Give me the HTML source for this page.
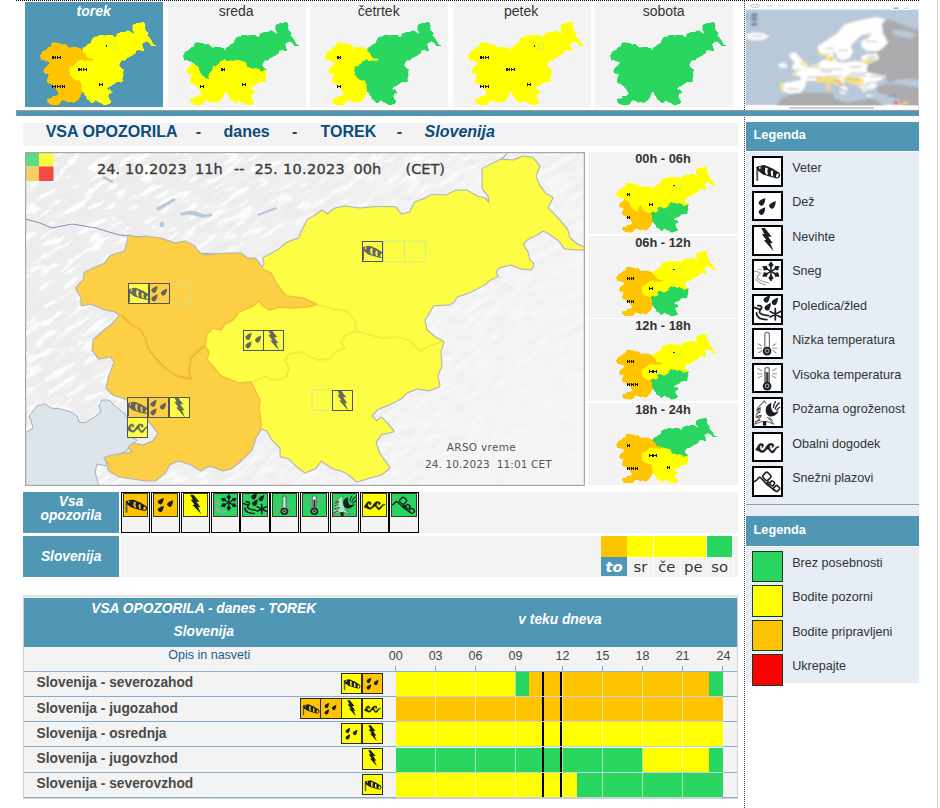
<!DOCTYPE html><html lang="sl"><head><meta charset="utf-8"><title>Opozorila</title><style>
html,body{margin:0;padding:0;background:#fff;}
body{width:940px;height:808px;position:relative;overflow:hidden;font-family:"Liberation Sans",sans-serif;color:#333;}
div,span,svg{position:absolute;box-sizing:border-box;}
span{white-space:nowrap;line-height:1;}
.ic{box-sizing:border-box;overflow:hidden;color:#1b1f23;}
.b{font-weight:bold}.i{font-style:italic}
.dv{font-family:"DejaVu Sans",sans-serif;}
.c{text-align:center;}
</style></head><body><svg width="0" height="0" style="left:0;top:0"><defs><symbol id="i-wind" viewBox="0 0 31 31"><rect x="4.1" y="11" width="2" height="14" fill="#555"/><path d="M4.1 11.2 Q8 9.6 12.3 9.1 L20 12.3 L27.6 17 Q29 19.5 27.6 21.6 Q26.6 23 25 22.7 L20 21.6 L10.8 18.7 L6 15Z" fill="currentColor"/><path d="M7.3 10.9 Q6.6 12.2 7.4 13.2 L8.6 12.9 Q8 11.8 8.7 10.7Z" fill="var(--bg,#fff)"/><path d="M13.4 11.6 Q12.2 15 13.8 18.4 L16 19 Q14.6 15.6 15.8 12.4Z" fill="var(--bg,#fff)"/><path d="M19.2 14.4 Q18.2 17.5 19.4 20.3 L21.4 20.8 Q20.4 18 21.3 15.4Z" fill="var(--bg,#fff)"/><ellipse cx="25.5" cy="19.7" rx="1.3" ry="2.1" transform="rotate(15 25.5 19.7)" fill="var(--bg,#fff)"/></symbol><symbol id="i-rain" viewBox="0 0 31 31"><path d="M13.4 7 Q13 11.6 11.5 13.7 A2.7 2.7 0 1 1 7.7 9.9 Q9.8 8.2 13.4 7 Z" fill="currentColor"/><path d="M24 10 Q23.6 14.6 22.1 16.7 A2.7 2.7 0 1 1 18.3 12.9 Q20.4 11.2 24 10 Z" fill="currentColor"/><path d="M13.4 16.4 Q13 21 11.5 23.1 A2.7 2.7 0 1 1 7.7 19.3 Q9.8 17.6 13.4 16.4 Z" fill="currentColor"/></symbol><symbol id="i-storm" viewBox="0 0 31 31"><path d="M9.1 3.1 L12.8 3.1 L19.7 11.8 L16.2 11.8 L20.9 18.5 L18.2 18.2 L21.7 26.6 L11.8 15.5 L14.3 15.2 L9.8 9.3 L12.3 9.1Z" fill="currentColor"/></symbol><symbol id="i-snow" viewBox="0 0 31 31"><g stroke="#a8a8a8" stroke-width="1.15" fill="none" stroke-linecap="round"><path d="M2.4 12.3 Q6 12.6 8.6 14.4 Q5 17 4.9 19.2 Q9 23 16.7 24.2"/><path d="M3.4 20.7 Q7 24.8 13.3 26.1"/><path d="M5.8 10.3 L9.3 10.8"/></g><g stroke="currentColor" stroke-width="1.5" stroke-linecap="round" fill="none"><line x1="19" y1="12.5" x2="19.00" y2="3.40"/><line x1="19" y1="12.5" x2="11.12" y2="7.95"/><line x1="19" y1="12.5" x2="11.12" y2="17.05"/><line x1="19" y1="12.5" x2="19.00" y2="21.60"/><line x1="19" y1="12.5" x2="26.88" y2="17.05"/><line x1="19" y1="12.5" x2="26.88" y2="7.95"/></g><g fill="currentColor"><path d="M19.00 9.31 L21.73 5.77 L19.00 2.76 L16.27 5.77Z"/><path d="M16.24 10.91 L14.53 6.77 L10.57 7.63 L11.80 11.50Z"/><path d="M16.24 14.09 L11.80 13.50 L10.57 17.37 L14.53 18.23Z"/><path d="M19.00 15.69 L16.27 19.23 L19.00 22.24 L21.73 19.23Z"/><path d="M21.76 14.09 L23.47 18.23 L27.43 17.37 L26.20 13.50Z"/><path d="M21.76 10.91 L26.20 11.50 L27.43 7.63 L23.47 6.77Z"/></g></symbol><symbol id="i-ice" viewBox="0 0 31 31"><path d="M18.1 1.2 Q17.7 5.8 16.2 7.9 A2.2 2.2 0 1 1 12.4 4.1 Q14.5 2.4 18.1 1.2 Z" fill="currentColor"/><path d="M26.3 3.6 Q25.9 8.2 24.4 10.3 A2.2 2.2 0 1 1 20.6 6.5 Q22.7 4.8 26.3 3.6 Z" fill="currentColor"/><path d="M19.1 9.1 Q18.7 13.7 17.2 15.8 A2.2 2.2 0 1 1 13.4 12 Q15.5 10.3 19.1 9.1 Z" fill="currentColor"/><g stroke="currentColor" stroke-width="1.8" fill="none" stroke-linecap="round"><path d="M2.4 13.8 L8.3 15.7"/><path d="M5.8 11.8 Q10.5 11.6 9.3 14.5 Q7 17 7.6 18.8 Q8.6 21 16.7 21.9"/><path d="M4.4 19.2 Q4.6 23 8 24.6 Q10.5 25.6 14.8 25.9"/><path d="M23.4 14.8 V26.1 M18.2 17.7 L28.6 23.2 M18.2 23.2 L28.6 17.7"/></g></symbol><symbol id="i-low" viewBox="0 0 31 31"><g stroke="#999" stroke-width="1.1" stroke-linecap="round"><path d="M5.8 15.9 L9.3 17.7 M5.3 20.5 H9.6 M6.1 25.1 L9.8 22.9 M24.2 15.9 L20.9 17.7 M24.9 20.5 H20.7 M24.2 25.3 L21.2 22.9"/></g><path d="M12.8 20 V6.6 a2.3 2.3 0 0 1 4.6 0 V20" fill="var(--bg,#fff)" stroke="#777" stroke-width="1.3"/><path d="M14 19 V7 a1.1 1.1 0 0 1 2.2 0 V19" fill="#fff" opacity="0.75"/><circle cx="15.1" cy="23.3" r="4.4" fill="currentColor"/><circle cx="15.1" cy="23.3" r="2.5" fill="#9a9a9a"/><circle cx="15.1" cy="23.3" r="1.2" fill="currentColor"/></symbol><symbol id="i-high" viewBox="0 0 31 31"><g stroke="#999" stroke-width="1.1" stroke-linecap="round"><path d="M5.8 5.6 L9.6 7.8 M5.3 10.8 H9.8 M6.1 15.2 L10 13 M24.4 5.6 L20.6 7.8 M24.9 10.8 H20.4 M24.1 15.2 L20.2 13"/></g><path d="M12.8 20 V6.6 a2.3 2.3 0 0 1 4.6 0 V20" fill="#8a8a8a" stroke="#777" stroke-width="1.3"/><path d="M13.6 9 V6.8 a1.5 1.5 0 0 1 3 0 V9Z" fill="#fff"/><path d="M15.1 9.5 V22" stroke="currentColor" stroke-width="1.2"/><circle cx="15.1" cy="23.3" r="4.4" fill="currentColor"/><circle cx="15.1" cy="23.3" r="2.5" fill="#9a9a9a"/><circle cx="15.1" cy="23.3" r="1.2" fill="currentColor"/></symbol><symbol id="i-fire" viewBox="0 0 31 31"><path d="M12.3 4 L5.3 11.6 L5 14.6 L3.9 19 L4.4 21 L2.4 27.5 L10.8 24.5 L14.3 24.5 L22 27.5 L15.5 20.5 L13 12 Z" fill="#fff" opacity="0.55"/><g stroke="#707070" stroke-width="1.1" fill="none" stroke-linecap="round" stroke-linejoin="round"><path d="M6 11.8 L8.6 11 M4.6 16.6 L8 15.4 M4.8 20 L8.6 18.4 M3.4 25 L8 23.2 M5 13 L7 12.6" stroke="#333"/><path d="M12.3 4 L5.3 11.6 Q4.6 13.4 5 14.6 Q7 14.2 8.3 12.9"/><path d="M8.3 12.9 L3.9 19 Q3.8 20.4 4.4 21 Q7.4 20.6 9.3 19"/><path d="M9.3 19 L2.4 27.5 L10.8 24.5"/><path d="M12.3 4 L13.8 6.2"/><path d="M15.5 20.5 L22 27.5 L14.3 24.5"/><path d="M17 21 L20.5 23.5"/></g><rect x="10.8" y="24.3" width="3.5" height="4.7" fill="currentColor"/><path d="M19.4 5.9 Q14 8 13.6 12.8 Q13.6 17.4 17 19.4 Q21 20.6 24 18 Q26.4 16 26.8 14 Q24.4 15.8 22.2 15.6 Q20.8 15.4 20.2 14 Q18.4 10 19.4 5.9Z" fill="currentColor"/><g stroke="currentColor" stroke-width="1.2" fill="none" stroke-linecap="round"><path d="M23.6 4.6 Q21.4 8 21.6 10.6"/><path d="M27.4 5.8 Q23.6 9.4 23.4 12.2"/><path d="M28 10.4 Q25.4 12 24.8 13.6"/></g></symbol><symbol id="i-coast" viewBox="0 0 31 31"><path d="M3.4 18.3 L4.9 15.6 L6.8 12.6 Q7.8 11.6 8.8 11.5 Q10.2 11.5 10.8 12.1 Q11.7 12.9 11.5 13.9 Q11.4 14.9 10.8 15.3 L9.6 15.6 Q10.2 15 10 14.4 Q9.9 13.5 9.3 13.4 Q8.5 13.4 8.1 14.1 Q7.5 15 7.8 16.1 Q8.1 17.4 8.8 18.1 Q9.5 18.8 10.3 18.8 Q11.4 18.6 12.3 17.6 L14.3 14.6 Q15.2 13.2 16.2 12.4 Q17.2 11.6 18.2 11.5 Q19.8 11.4 20.7 11.9 Q21.8 12.4 21.9 13.4 Q22 14.5 21.2 15.1 L19.7 15.6 Q20.4 15.1 20.2 14.4 Q20 13.2 19.2 13.1 Q18.4 13.2 18 13.9 Q17.4 15 17.7 16.1 Q18 17.4 18.7 18.1 Q19.4 19 20.2 19.1 Q21.3 18.9 22.2 17.6 L24.2 15.3 Q25.4 14.6 27.3 14.8 L27.1 15.3 Q25.6 15.6 24.7 16.6 L22.7 19.6 Q21.5 21.2 20.2 21.3 Q18.8 21.2 17.7 19.1 Q16.8 17.4 15.7 17.1 Q14.4 17.6 13.3 19.1 Q12 20.8 10.3 20.8 Q8.6 20.6 7.4 19.8 Q6 18.8 3.4 18.3Z" fill="currentColor" stroke="currentColor" stroke-width="0.5" stroke-linejoin="round"/></symbol><symbol id="i-aval" viewBox="0 0 31 31"><g stroke="currentColor" stroke-width="1.6" fill="none" stroke-linecap="round" stroke-linejoin="round"><path d="M1.9 15.8 Q3.6 15.2 4.9 13.9 L6.4 12 Q7.3 11 8.2 11.6 L12.3 15.8 L15.7 19.3 L19.2 21.8 L22.2 24.3"/><rect x="11.3" y="7" width="7" height="7" rx="1.96" transform="rotate(44 14.8 10.5)"/><rect x="18.05" y="15.45" width="4.3" height="4.3" rx="1.204" transform="rotate(35 20.2 17.6)"/><rect x="22.1" y="20.2" width="5.2" height="5.2" rx="1.456" transform="rotate(44 24.7 22.8)"/><rect x="15.15" y="16.35" width="2.3" height="2.3" rx="0.644" transform="rotate(20 16.3 17.5)"/></g></symbol><symbol id="r-NW" viewBox="76 156 512 326" preserveAspectRatio="none"><path d="M129 236 L137 238 L145 237 L161 239 L175 244 L185 242 L193 246 L199 253 L205 256 L213 255 L225 254 L241 254 L247 259 L255 259 L261 267 L262 269 L271 273 L277 284 L283 292 L287 296 L303 298 L317 304.5 L307 307 L293 308 L281 307 L269 310 L263 306 L259 301 L253 306 L239 312 L233 320 L225 324 L221 330 L213 328 L211 330 L207 334 L205 346 L199 350 L191 358 L189 370 L191 379 L177 376 L165 368 L157 360 L149 350 L145 338 L141 330 L133 326 L121 315 L115 311 L105 309 L91 303 L82 305 L82 298 L76.6 288 L84 280 L85 273 L93 269 L105 264 L111 256 L125 252 L128 242 L129 236Z"/></symbol><symbol id="r-NE" viewBox="76 156 512 326" preserveAspectRatio="none"><path d="M262 269 L265 264 L264 258 L279 250 L287 243 L299 239 L303 230 L308 220 L315 216 L322 211 L327 215 L335 209 L345 207 L360 209 L375 207.5 L395 207.5 L401 215 L410 213 L415 203 L425 199 L431 195.5 L446 196 L456 191 L467 191 L477 197 L485 199 L490 205 L489 196 L483 188 L483 169 L491 165 L501 160 L513 161 L523 157 L532 158 L539 166 L535 176 L539 186 L545 194 L552 198 L547 208 L557 218 L567 230 L569 238 L577 245 L587 249 L575 249 L565 248 L559 240 L549 233 L543 230 L537 234 L527 239 L522 244 L527 252 L529 260 L533 264 L531 269 L521 268 L511 264 L499 267 L495 272 L497 276 L489 280 L485 284 L469 292 L457 296 L453 302 L449 304 L433 305 L429 312 L424 320 L426 330 L434 337 L443 342 L441 342 L429 346 L421 351 L415 346 L409 340 L397 337 L381 338 L367 334 L355 331 L356 324 L353 318 L347 311 L333 309 L317 304.5 L303 298 L287 296 L283 292 L277 284 L271 273 L262 269Z"/></symbol><symbol id="r-SW" viewBox="76 156 512 326" preserveAspectRatio="none"><path d="M121 315 L113 324 L101 334 L94 340 L93 350 L99 358 L111 356 L115 362 L109 378 L107 388 L113 394 L125 398 L137 406 L147 418 L155 428 L159 434 L153 442 L143 446 L133 444 L129 448 L135 452 L125 454 L113 456 L105 458 L109 464 L109 470 L119 476 L133 478 L145 480 L155 480 L165 472 L169 464 L179 460 L191 464 L201 470 L207 466 L213 466 L223 470 L231 468 L241 460 L251 450 L255 438 L261 428 L261 420 L259 410 L260 400 L255 390 L251 382 L239 383 L231 380 L221 376 L213 366 L207 360 L209 352 L205 346 L199 350 L191 358 L189 370 L191 379 L177 376 L165 368 L157 360 L149 350 L145 338 L141 330 L133 326 L121 315Z"/></symbol><symbol id="r-C" viewBox="76 156 512 326" preserveAspectRatio="none"><path d="M205 346 L207 334 L211 330 L213 328 L221 330 L225 324 L233 320 L239 312 L253 306 L259 301 L263 306 L269 310 L281 307 L293 308 L307 307 L317 304.5 L333 309 L347 311 L353 318 L356 324 L355 331 L345 336 L341 342 L345 348 L335 352 L329 359 L317 360 L309 356 L301 352 L289 354 L285 360 L289 368 L287 376 L281 379 L271 380 L265 376 L257 380 L251 382 L239 383 L231 380 L221 376 L213 366 L207 360 L209 352 L205 346Z"/></symbol><symbol id="r-SE" viewBox="76 156 512 326" preserveAspectRatio="none"><path d="M355 331 L367 334 L381 338 L397 337 L409 340 L415 346 L421 351 L429 346 L441 342 L443 342 L440 352 L441 366 L437 376 L439 386 L429 390 L417 388 L407 392 L401 398 L389 404 L377 409 L371 416 L377 422 L381 418 L387 424 L393 431 L381 434 L375 442 L379 454 L385 462 L389 468 L381 474 L367 478 L357 481 L349 474 L341 470 L333 468 L321 460 L315 468 L305 472 L297 466 L289 458 L281 456 L281 448 L273 440 L267 430 L261 428 L261 420 L259 410 L260 400 L255 390 L251 382 L257 380 L265 376 L271 380 L281 379 L287 376 L289 368 L285 360 L289 354 L301 352 L309 356 L317 360 L329 359 L335 352 L345 348 L341 342 L345 336 L355 331Z"/></symbol></defs></svg>
<div style="left:16px;top:0px;width:903px;height:1px;border-top:1px dotted #000;"></div>
<div style="left:744px;top:0px;width:1px;height:808px;border-left:1px dotted #3a3a3a;"></div>
<div style="left:16px;top:110px;width:903px;height:6px;background:#4f97b5;border-top:1px solid #9a9a9a;border-left:1px solid #9a9a9a;"></div>
<div style="left:937px;top:0px;width:1.2px;height:808px;background:#d0d0d0;"></div>
<div style="left:25px;top:2px;width:138.3px;height:105px;background:#4f97b5;"></div>
<span class="b i c" style="left:24.5px;top:4.05px;font-size:14px;width:138.3px;color:#fff;">torek</span>
<svg style="left:40.2px;top:21.6px;width:116.6px;height:83.7px" viewBox="76 156 512 326" preserveAspectRatio="none" shape-rendering="crispEdges"><path d="M129 236 L137 238 L145 237 L161 239 L175 244 L185 242 L193 246 L199 253 L205 256 L213 255 L225 254 L241 254 L247 259 L255 259 L261 267 L262 269 L271 273 L277 284 L283 292 L287 296 L303 298 L317 304.5 L307 307 L293 308 L281 307 L269 310 L263 306 L259 301 L253 306 L239 312 L233 320 L225 324 L221 330 L213 328 L211 330 L207 334 L205 346 L199 350 L191 358 L189 370 L191 379 L177 376 L165 368 L157 360 L149 350 L145 338 L141 330 L133 326 L121 315 L115 311 L105 309 L91 303 L82 305 L82 298 L76.6 288 L84 280 L85 273 L93 269 L105 264 L111 256 L125 252 L128 242 L129 236Z" fill="#ffc400" stroke="#ffc400" stroke-width="2"/><path d="M262 269 L265 264 L264 258 L279 250 L287 243 L299 239 L303 230 L308 220 L315 216 L322 211 L327 215 L335 209 L345 207 L360 209 L375 207.5 L395 207.5 L401 215 L410 213 L415 203 L425 199 L431 195.5 L446 196 L456 191 L467 191 L477 197 L485 199 L490 205 L489 196 L483 188 L483 169 L491 165 L501 160 L513 161 L523 157 L532 158 L539 166 L535 176 L539 186 L545 194 L552 198 L547 208 L557 218 L567 230 L569 238 L577 245 L587 249 L575 249 L565 248 L559 240 L549 233 L543 230 L537 234 L527 239 L522 244 L527 252 L529 260 L533 264 L531 269 L521 268 L511 264 L499 267 L495 272 L497 276 L489 280 L485 284 L469 292 L457 296 L453 302 L449 304 L433 305 L429 312 L424 320 L426 330 L434 337 L443 342 L441 342 L429 346 L421 351 L415 346 L409 340 L397 337 L381 338 L367 334 L355 331 L356 324 L353 318 L347 311 L333 309 L317 304.5 L303 298 L287 296 L283 292 L277 284 L271 273 L262 269Z" fill="#ffff00" stroke="#ffff00" stroke-width="2"/><path d="M121 315 L113 324 L101 334 L94 340 L93 350 L99 358 L111 356 L115 362 L109 378 L107 388 L113 394 L125 398 L137 406 L147 418 L155 428 L159 434 L153 442 L143 446 L133 444 L129 448 L135 452 L125 454 L113 456 L105 458 L109 464 L109 470 L119 476 L133 478 L145 480 L155 480 L165 472 L169 464 L179 460 L191 464 L201 470 L207 466 L213 466 L223 470 L231 468 L241 460 L251 450 L255 438 L261 428 L261 420 L259 410 L260 400 L255 390 L251 382 L239 383 L231 380 L221 376 L213 366 L207 360 L209 352 L205 346 L199 350 L191 358 L189 370 L191 379 L177 376 L165 368 L157 360 L149 350 L145 338 L141 330 L133 326 L121 315Z" fill="#ffc400" stroke="#ffc400" stroke-width="2"/><path d="M355 331 L367 334 L381 338 L397 337 L409 340 L415 346 L421 351 L429 346 L441 342 L443 342 L440 352 L441 366 L437 376 L439 386 L429 390 L417 388 L407 392 L401 398 L389 404 L377 409 L371 416 L377 422 L381 418 L387 424 L393 431 L381 434 L375 442 L379 454 L385 462 L389 468 L381 474 L367 478 L357 481 L349 474 L341 470 L333 468 L321 460 L315 468 L305 472 L297 466 L289 458 L281 456 L281 448 L273 440 L267 430 L261 428 L261 420 L259 410 L260 400 L255 390 L251 382 L257 380 L265 376 L271 380 L281 379 L287 376 L289 368 L285 360 L289 354 L301 352 L309 356 L317 360 L329 359 L335 352 L345 348 L341 342 L345 336 L355 331Z" fill="#ffff00" stroke="#ffff00" stroke-width="2"/><path d="M205 346 L207 334 L211 330 L213 328 L221 330 L225 324 L233 320 L239 312 L253 306 L259 301 L263 306 L269 310 L281 307 L293 308 L307 307 L317 304.5 L333 309 L347 311 L353 318 L356 324 L355 331 L345 336 L341 342 L345 348 L335 352 L329 359 L317 360 L309 356 L301 352 L289 354 L285 360 L289 368 L287 376 L281 379 L271 380 L265 376 L257 380 L251 382 L239 383 L231 380 L221 376 L213 366 L207 360 L209 352 L205 346Z" fill="#ffff00" stroke="#ffff00" stroke-width="2"/><path d="M130.4 287.1 h5 v4.5 h7 v-4.5 h5 v14 h-5 v-4.5 h-7 v4.5 h-5z" fill="#151515"/><path d="M151 287.1 h5 v4.5 h7 v-4.5 h5 v14 h-5 v-4.5 h-7 v4.5 h-5z" fill="#151515"/><path d="M244.6 333.5 h5 v4.5 h7 v-4.5 h5 v14 h-5 v-4.5 h-7 v4.5 h-5z" fill="#151515"/><path d="M265 333.5 h5 v4.5 h7 v-4.5 h5 v14 h-5 v-4.5 h-7 v4.5 h-5z" fill="#151515"/><path d="M129.4 400.5 h5 v4.5 h7 v-4.5 h5 v14 h-5 v-4.5 h-7 v4.5 h-5z" fill="#151515"/><path d="M150 400.5 h5 v4.5 h7 v-4.5 h5 v14 h-5 v-4.5 h-7 v4.5 h-5z" fill="#151515"/><path d="M170.6 400.5 h5 v4.5 h7 v-4.5 h5 v14 h-5 v-4.5 h-7 v4.5 h-5z" fill="#151515"/><path d="M334.4 393.1 h5 v4.5 h7 v-4.5 h5 v14 h-5 v-4.5 h-7 v4.5 h-5z" fill="#151515"/><rect x="365.3" y="244.5" width="7" height="7" fill="#333"/><rect x="384.3" y="241.5" width="22" height="20" fill="none" stroke="#b8ee70" stroke-width="2.5"/></svg>
<div style="left:167.5px;top:2px;width:138.3px;height:105px;background:#f3f3f3;"></div>
<span class="c" style="left:167px;top:4.05px;font-size:14px;width:138.3px;color:#333;">sreda</span>
<svg style="left:182.7px;top:21.6px;width:116.6px;height:83.7px" viewBox="76 156 512 326" preserveAspectRatio="none" shape-rendering="crispEdges"><path d="M129 236 L137 238 L145 237 L161 239 L175 244 L185 242 L193 246 L199 253 L205 256 L213 255 L225 254 L241 254 L247 259 L255 259 L261 267 L262 269 L271 273 L277 284 L283 292 L287 296 L303 298 L317 304.5 L307 307 L293 308 L281 307 L269 310 L263 306 L259 301 L253 306 L239 312 L233 320 L225 324 L221 330 L213 328 L211 330 L207 334 L205 346 L199 350 L191 358 L189 370 L191 379 L177 376 L165 368 L157 360 L149 350 L145 338 L141 330 L133 326 L121 315 L115 311 L105 309 L91 303 L82 305 L82 298 L76.6 288 L84 280 L85 273 L93 269 L105 264 L111 256 L125 252 L128 242 L129 236Z" fill="#29d660" stroke="#29d660" stroke-width="2"/><path d="M262 269 L265 264 L264 258 L279 250 L287 243 L299 239 L303 230 L308 220 L315 216 L322 211 L327 215 L335 209 L345 207 L360 209 L375 207.5 L395 207.5 L401 215 L410 213 L415 203 L425 199 L431 195.5 L446 196 L456 191 L467 191 L477 197 L485 199 L490 205 L489 196 L483 188 L483 169 L491 165 L501 160 L513 161 L523 157 L532 158 L539 166 L535 176 L539 186 L545 194 L552 198 L547 208 L557 218 L567 230 L569 238 L577 245 L587 249 L575 249 L565 248 L559 240 L549 233 L543 230 L537 234 L527 239 L522 244 L527 252 L529 260 L533 264 L531 269 L521 268 L511 264 L499 267 L495 272 L497 276 L489 280 L485 284 L469 292 L457 296 L453 302 L449 304 L433 305 L429 312 L424 320 L426 330 L434 337 L443 342 L441 342 L429 346 L421 351 L415 346 L409 340 L397 337 L381 338 L367 334 L355 331 L356 324 L353 318 L347 311 L333 309 L317 304.5 L303 298 L287 296 L283 292 L277 284 L271 273 L262 269Z" fill="#29d660" stroke="#29d660" stroke-width="2"/><path d="M121 315 L113 324 L101 334 L94 340 L93 350 L99 358 L111 356 L115 362 L109 378 L107 388 L113 394 L125 398 L137 406 L147 418 L155 428 L159 434 L153 442 L143 446 L133 444 L129 448 L135 452 L125 454 L113 456 L105 458 L109 464 L109 470 L119 476 L133 478 L145 480 L155 480 L165 472 L169 464 L179 460 L191 464 L201 470 L207 466 L213 466 L223 470 L231 468 L241 460 L251 450 L255 438 L261 428 L261 420 L259 410 L260 400 L255 390 L251 382 L239 383 L231 380 L221 376 L213 366 L207 360 L209 352 L205 346 L199 350 L191 358 L189 370 L191 379 L177 376 L165 368 L157 360 L149 350 L145 338 L141 330 L133 326 L121 315Z" fill="#ffff00" stroke="#ffff00" stroke-width="2"/><path d="M355 331 L367 334 L381 338 L397 337 L409 340 L415 346 L421 351 L429 346 L441 342 L443 342 L440 352 L441 366 L437 376 L439 386 L429 390 L417 388 L407 392 L401 398 L389 404 L377 409 L371 416 L377 422 L381 418 L387 424 L393 431 L381 434 L375 442 L379 454 L385 462 L389 468 L381 474 L367 478 L357 481 L349 474 L341 470 L333 468 L321 460 L315 468 L305 472 L297 466 L289 458 L281 456 L281 448 L273 440 L267 430 L261 428 L261 420 L259 410 L260 400 L255 390 L251 382 L257 380 L265 376 L271 380 L281 379 L287 376 L289 368 L285 360 L289 354 L301 352 L309 356 L317 360 L329 359 L335 352 L345 348 L341 342 L345 336 L355 331Z" fill="#ffff00" stroke="#ffff00" stroke-width="2"/><path d="M205 346 L207 334 L211 330 L213 328 L221 330 L225 324 L233 320 L239 312 L253 306 L259 301 L263 306 L269 310 L281 307 L293 308 L307 307 L317 304.5 L333 309 L347 311 L353 318 L356 324 L355 331 L345 336 L341 342 L345 348 L335 352 L329 359 L317 360 L309 356 L301 352 L289 354 L285 360 L289 368 L287 376 L281 379 L271 380 L265 376 L257 380 L251 382 L239 383 L231 380 L221 376 L213 366 L207 360 L209 352 L205 346Z" fill="#ffff00" stroke="#ffff00" stroke-width="2"/><path d="M244.6 333.5 h5 v4.5 h7 v-4.5 h5 v14 h-5 v-4.5 h-7 v4.5 h-5z" fill="#151515"/><path d="M150 400.5 h5 v4.5 h7 v-4.5 h5 v14 h-5 v-4.5 h-7 v4.5 h-5z" fill="#151515"/><path d="M334.4 393.1 h5 v4.5 h7 v-4.5 h5 v14 h-5 v-4.5 h-7 v4.5 h-5z" fill="#151515"/></svg>
<div style="left:310px;top:2px;width:138.3px;height:105px;background:#f3f3f3;"></div>
<span class="c" style="left:309.5px;top:4.05px;font-size:14px;width:138.3px;color:#333;">četrtek</span>
<svg style="left:325.2px;top:21.6px;width:116.6px;height:83.7px" viewBox="76 156 512 326" preserveAspectRatio="none" shape-rendering="crispEdges"><path d="M129 236 L137 238 L145 237 L161 239 L175 244 L185 242 L193 246 L199 253 L205 256 L213 255 L225 254 L241 254 L247 259 L255 259 L261 267 L262 269 L271 273 L277 284 L283 292 L287 296 L303 298 L317 304.5 L307 307 L293 308 L281 307 L269 310 L263 306 L259 301 L253 306 L239 312 L233 320 L225 324 L221 330 L213 328 L211 330 L207 334 L205 346 L199 350 L191 358 L189 370 L191 379 L177 376 L165 368 L157 360 L149 350 L145 338 L141 330 L133 326 L121 315 L115 311 L105 309 L91 303 L82 305 L82 298 L76.6 288 L84 280 L85 273 L93 269 L105 264 L111 256 L125 252 L128 242 L129 236Z" fill="#ffff00" stroke="#ffff00" stroke-width="2"/><path d="M262 269 L265 264 L264 258 L279 250 L287 243 L299 239 L303 230 L308 220 L315 216 L322 211 L327 215 L335 209 L345 207 L360 209 L375 207.5 L395 207.5 L401 215 L410 213 L415 203 L425 199 L431 195.5 L446 196 L456 191 L467 191 L477 197 L485 199 L490 205 L489 196 L483 188 L483 169 L491 165 L501 160 L513 161 L523 157 L532 158 L539 166 L535 176 L539 186 L545 194 L552 198 L547 208 L557 218 L567 230 L569 238 L577 245 L587 249 L575 249 L565 248 L559 240 L549 233 L543 230 L537 234 L527 239 L522 244 L527 252 L529 260 L533 264 L531 269 L521 268 L511 264 L499 267 L495 272 L497 276 L489 280 L485 284 L469 292 L457 296 L453 302 L449 304 L433 305 L429 312 L424 320 L426 330 L434 337 L443 342 L441 342 L429 346 L421 351 L415 346 L409 340 L397 337 L381 338 L367 334 L355 331 L356 324 L353 318 L347 311 L333 309 L317 304.5 L303 298 L287 296 L283 292 L277 284 L271 273 L262 269Z" fill="#29d660" stroke="#29d660" stroke-width="2"/><path d="M121 315 L113 324 L101 334 L94 340 L93 350 L99 358 L111 356 L115 362 L109 378 L107 388 L113 394 L125 398 L137 406 L147 418 L155 428 L159 434 L153 442 L143 446 L133 444 L129 448 L135 452 L125 454 L113 456 L105 458 L109 464 L109 470 L119 476 L133 478 L145 480 L155 480 L165 472 L169 464 L179 460 L191 464 L201 470 L207 466 L213 466 L223 470 L231 468 L241 460 L251 450 L255 438 L261 428 L261 420 L259 410 L260 400 L255 390 L251 382 L239 383 L231 380 L221 376 L213 366 L207 360 L209 352 L205 346 L199 350 L191 358 L189 370 L191 379 L177 376 L165 368 L157 360 L149 350 L145 338 L141 330 L133 326 L121 315Z" fill="#ffff00" stroke="#ffff00" stroke-width="2"/><path d="M355 331 L367 334 L381 338 L397 337 L409 340 L415 346 L421 351 L429 346 L441 342 L443 342 L440 352 L441 366 L437 376 L439 386 L429 390 L417 388 L407 392 L401 398 L389 404 L377 409 L371 416 L377 422 L381 418 L387 424 L393 431 L381 434 L375 442 L379 454 L385 462 L389 468 L381 474 L367 478 L357 481 L349 474 L341 470 L333 468 L321 460 L315 468 L305 472 L297 466 L289 458 L281 456 L281 448 L273 440 L267 430 L261 428 L261 420 L259 410 L260 400 L255 390 L251 382 L257 380 L265 376 L271 380 L281 379 L287 376 L289 368 L285 360 L289 354 L301 352 L309 356 L317 360 L329 359 L335 352 L345 348 L341 342 L345 336 L355 331Z" fill="#29d660" stroke="#29d660" stroke-width="2"/><path d="M205 346 L207 334 L211 330 L213 328 L221 330 L225 324 L233 320 L239 312 L253 306 L259 301 L263 306 L269 310 L281 307 L293 308 L307 307 L317 304.5 L333 309 L347 311 L353 318 L356 324 L355 331 L345 336 L341 342 L345 348 L335 352 L329 359 L317 360 L309 356 L301 352 L289 354 L285 360 L289 368 L287 376 L281 379 L271 380 L265 376 L257 380 L251 382 L239 383 L231 380 L221 376 L213 366 L207 360 L209 352 L205 346Z" fill="#29d660" stroke="#29d660" stroke-width="2"/><path d="M130.4 287.1 h5 v4.5 h7 v-4.5 h5 v14 h-5 v-4.5 h-7 v4.5 h-5z" fill="#151515"/><path d="M129.4 400.5 h5 v4.5 h7 v-4.5 h5 v14 h-5 v-4.5 h-7 v4.5 h-5z" fill="#151515"/></svg>
<div style="left:452.5px;top:2px;width:138.3px;height:105px;background:#f3f3f3;"></div>
<span class="c" style="left:452px;top:4.05px;font-size:14px;width:138.3px;color:#333;">petek</span>
<svg style="left:467.7px;top:21.6px;width:116.6px;height:83.7px" viewBox="76 156 512 326" preserveAspectRatio="none" shape-rendering="crispEdges"><path d="M129 236 L137 238 L145 237 L161 239 L175 244 L185 242 L193 246 L199 253 L205 256 L213 255 L225 254 L241 254 L247 259 L255 259 L261 267 L262 269 L271 273 L277 284 L283 292 L287 296 L303 298 L317 304.5 L307 307 L293 308 L281 307 L269 310 L263 306 L259 301 L253 306 L239 312 L233 320 L225 324 L221 330 L213 328 L211 330 L207 334 L205 346 L199 350 L191 358 L189 370 L191 379 L177 376 L165 368 L157 360 L149 350 L145 338 L141 330 L133 326 L121 315 L115 311 L105 309 L91 303 L82 305 L82 298 L76.6 288 L84 280 L85 273 L93 269 L105 264 L111 256 L125 252 L128 242 L129 236Z" fill="#ffff00" stroke="#ffff00" stroke-width="2"/><path d="M262 269 L265 264 L264 258 L279 250 L287 243 L299 239 L303 230 L308 220 L315 216 L322 211 L327 215 L335 209 L345 207 L360 209 L375 207.5 L395 207.5 L401 215 L410 213 L415 203 L425 199 L431 195.5 L446 196 L456 191 L467 191 L477 197 L485 199 L490 205 L489 196 L483 188 L483 169 L491 165 L501 160 L513 161 L523 157 L532 158 L539 166 L535 176 L539 186 L545 194 L552 198 L547 208 L557 218 L567 230 L569 238 L577 245 L587 249 L575 249 L565 248 L559 240 L549 233 L543 230 L537 234 L527 239 L522 244 L527 252 L529 260 L533 264 L531 269 L521 268 L511 264 L499 267 L495 272 L497 276 L489 280 L485 284 L469 292 L457 296 L453 302 L449 304 L433 305 L429 312 L424 320 L426 330 L434 337 L443 342 L441 342 L429 346 L421 351 L415 346 L409 340 L397 337 L381 338 L367 334 L355 331 L356 324 L353 318 L347 311 L333 309 L317 304.5 L303 298 L287 296 L283 292 L277 284 L271 273 L262 269Z" fill="#ffff00" stroke="#ffff00" stroke-width="2"/><path d="M121 315 L113 324 L101 334 L94 340 L93 350 L99 358 L111 356 L115 362 L109 378 L107 388 L113 394 L125 398 L137 406 L147 418 L155 428 L159 434 L153 442 L143 446 L133 444 L129 448 L135 452 L125 454 L113 456 L105 458 L109 464 L109 470 L119 476 L133 478 L145 480 L155 480 L165 472 L169 464 L179 460 L191 464 L201 470 L207 466 L213 466 L223 470 L231 468 L241 460 L251 450 L255 438 L261 428 L261 420 L259 410 L260 400 L255 390 L251 382 L239 383 L231 380 L221 376 L213 366 L207 360 L209 352 L205 346 L199 350 L191 358 L189 370 L191 379 L177 376 L165 368 L157 360 L149 350 L145 338 L141 330 L133 326 L121 315Z" fill="#ffff00" stroke="#ffff00" stroke-width="2"/><path d="M355 331 L367 334 L381 338 L397 337 L409 340 L415 346 L421 351 L429 346 L441 342 L443 342 L440 352 L441 366 L437 376 L439 386 L429 390 L417 388 L407 392 L401 398 L389 404 L377 409 L371 416 L377 422 L381 418 L387 424 L393 431 L381 434 L375 442 L379 454 L385 462 L389 468 L381 474 L367 478 L357 481 L349 474 L341 470 L333 468 L321 460 L315 468 L305 472 L297 466 L289 458 L281 456 L281 448 L273 440 L267 430 L261 428 L261 420 L259 410 L260 400 L255 390 L251 382 L257 380 L265 376 L271 380 L281 379 L287 376 L289 368 L285 360 L289 354 L301 352 L309 356 L317 360 L329 359 L335 352 L345 348 L341 342 L345 336 L355 331Z" fill="#ffff00" stroke="#ffff00" stroke-width="2"/><path d="M205 346 L207 334 L211 330 L213 328 L221 330 L225 324 L233 320 L239 312 L253 306 L259 301 L263 306 L269 310 L281 307 L293 308 L307 307 L317 304.5 L333 309 L347 311 L353 318 L356 324 L355 331 L345 336 L341 342 L345 348 L335 352 L329 359 L317 360 L309 356 L301 352 L289 354 L285 360 L289 368 L287 376 L281 379 L271 380 L265 376 L257 380 L251 382 L239 383 L231 380 L221 376 L213 366 L207 360 L209 352 L205 346Z" fill="#ffff00" stroke="#ffff00" stroke-width="2"/><path d="M130.4 287.1 h5 v4.5 h7 v-4.5 h5 v14 h-5 v-4.5 h-7 v4.5 h-5z" fill="#151515"/><path d="M151 287.1 h5 v4.5 h7 v-4.5 h5 v14 h-5 v-4.5 h-7 v4.5 h-5z" fill="#151515"/><path d="M244.6 333.5 h5 v4.5 h7 v-4.5 h5 v14 h-5 v-4.5 h-7 v4.5 h-5z" fill="#151515"/><path d="M265 333.5 h5 v4.5 h7 v-4.5 h5 v14 h-5 v-4.5 h-7 v4.5 h-5z" fill="#151515"/><path d="M129.4 400.5 h5 v4.5 h7 v-4.5 h5 v14 h-5 v-4.5 h-7 v4.5 h-5z" fill="#151515"/><path d="M150 400.5 h5 v4.5 h7 v-4.5 h5 v14 h-5 v-4.5 h-7 v4.5 h-5z" fill="#151515"/><path d="M334.4 393.1 h5 v4.5 h7 v-4.5 h5 v14 h-5 v-4.5 h-7 v4.5 h-5z" fill="#151515"/><rect x="365.3" y="244.5" width="7" height="7" fill="#333"/><rect x="384.3" y="241.5" width="22" height="20" fill="none" stroke="#b8ee70" stroke-width="2.5"/></svg>
<div style="left:595px;top:2px;width:138.3px;height:105px;background:#f3f3f3;"></div>
<span class="c" style="left:594.5px;top:4.05px;font-size:14px;width:138.3px;color:#333;">sobota</span>
<svg style="left:610.2px;top:21.6px;width:116.6px;height:83.7px" viewBox="76 156 512 326" preserveAspectRatio="none" shape-rendering="crispEdges"><path d="M129 236 L137 238 L145 237 L161 239 L175 244 L185 242 L193 246 L199 253 L205 256 L213 255 L225 254 L241 254 L247 259 L255 259 L261 267 L262 269 L271 273 L277 284 L283 292 L287 296 L303 298 L317 304.5 L307 307 L293 308 L281 307 L269 310 L263 306 L259 301 L253 306 L239 312 L233 320 L225 324 L221 330 L213 328 L211 330 L207 334 L205 346 L199 350 L191 358 L189 370 L191 379 L177 376 L165 368 L157 360 L149 350 L145 338 L141 330 L133 326 L121 315 L115 311 L105 309 L91 303 L82 305 L82 298 L76.6 288 L84 280 L85 273 L93 269 L105 264 L111 256 L125 252 L128 242 L129 236Z" fill="#29d660" stroke="#29d660" stroke-width="2"/><path d="M262 269 L265 264 L264 258 L279 250 L287 243 L299 239 L303 230 L308 220 L315 216 L322 211 L327 215 L335 209 L345 207 L360 209 L375 207.5 L395 207.5 L401 215 L410 213 L415 203 L425 199 L431 195.5 L446 196 L456 191 L467 191 L477 197 L485 199 L490 205 L489 196 L483 188 L483 169 L491 165 L501 160 L513 161 L523 157 L532 158 L539 166 L535 176 L539 186 L545 194 L552 198 L547 208 L557 218 L567 230 L569 238 L577 245 L587 249 L575 249 L565 248 L559 240 L549 233 L543 230 L537 234 L527 239 L522 244 L527 252 L529 260 L533 264 L531 269 L521 268 L511 264 L499 267 L495 272 L497 276 L489 280 L485 284 L469 292 L457 296 L453 302 L449 304 L433 305 L429 312 L424 320 L426 330 L434 337 L443 342 L441 342 L429 346 L421 351 L415 346 L409 340 L397 337 L381 338 L367 334 L355 331 L356 324 L353 318 L347 311 L333 309 L317 304.5 L303 298 L287 296 L283 292 L277 284 L271 273 L262 269Z" fill="#29d660" stroke="#29d660" stroke-width="2"/><path d="M121 315 L113 324 L101 334 L94 340 L93 350 L99 358 L111 356 L115 362 L109 378 L107 388 L113 394 L125 398 L137 406 L147 418 L155 428 L159 434 L153 442 L143 446 L133 444 L129 448 L135 452 L125 454 L113 456 L105 458 L109 464 L109 470 L119 476 L133 478 L145 480 L155 480 L165 472 L169 464 L179 460 L191 464 L201 470 L207 466 L213 466 L223 470 L231 468 L241 460 L251 450 L255 438 L261 428 L261 420 L259 410 L260 400 L255 390 L251 382 L239 383 L231 380 L221 376 L213 366 L207 360 L209 352 L205 346 L199 350 L191 358 L189 370 L191 379 L177 376 L165 368 L157 360 L149 350 L145 338 L141 330 L133 326 L121 315Z" fill="#29d660" stroke="#29d660" stroke-width="2"/><path d="M355 331 L367 334 L381 338 L397 337 L409 340 L415 346 L421 351 L429 346 L441 342 L443 342 L440 352 L441 366 L437 376 L439 386 L429 390 L417 388 L407 392 L401 398 L389 404 L377 409 L371 416 L377 422 L381 418 L387 424 L393 431 L381 434 L375 442 L379 454 L385 462 L389 468 L381 474 L367 478 L357 481 L349 474 L341 470 L333 468 L321 460 L315 468 L305 472 L297 466 L289 458 L281 456 L281 448 L273 440 L267 430 L261 428 L261 420 L259 410 L260 400 L255 390 L251 382 L257 380 L265 376 L271 380 L281 379 L287 376 L289 368 L285 360 L289 354 L301 352 L309 356 L317 360 L329 359 L335 352 L345 348 L341 342 L345 336 L355 331Z" fill="#29d660" stroke="#29d660" stroke-width="2"/><path d="M205 346 L207 334 L211 330 L213 328 L221 330 L225 324 L233 320 L239 312 L253 306 L259 301 L263 306 L269 310 L281 307 L293 308 L307 307 L317 304.5 L333 309 L347 311 L353 318 L356 324 L355 331 L345 336 L341 342 L345 348 L335 352 L329 359 L317 360 L309 356 L301 352 L289 354 L285 360 L289 368 L287 376 L281 379 L271 380 L265 376 L257 380 L251 382 L239 383 L231 380 L221 376 L213 366 L207 360 L209 352 L205 346Z" fill="#29d660" stroke="#29d660" stroke-width="2"/></svg>
<svg style="left:745px;top:0;width:175px;height:112px" viewBox="745 0 175 112"><defs><filter id="bl" x="-5%" y="-5%" width="110%" height="110%"><feGaussianBlur stdDeviation="0.8"/></filter><filter id="bl2"><feGaussianBlur stdDeviation="0.45"/></filter><clipPath id="euc"><rect x="745.6" y="1.6" width="173" height="108.2"/></clipPath></defs><rect x="745.6" y="1.6" width="173" height="108.2" fill="#fff"/><g clip-path="url(#euc)"><g filter="url(#bl)"><rect x="740" y="9" width="185" height="96.5" fill="#b9c9d9"/><path d="M881.7 24.6 L885.6 19.5 L890 20 L900 23 L910 28 L925 31 L925 80 L905 79 L897 80 L890 83 L886 80 L886.8 75.7 L876.6 74.4 L866.4 71.9 L867.7 64.2 L876.6 59.1 L879.2 59.1 L876.6 52.7 L881.7 48.9 L888 42.5 L883 33.5Z" fill="#ababad"/><path d="M892 30 L905 30.5 L916 34 L911 38.5 L900 37 L894 35Z" fill="#b9c9d9"/><path d="M876.6 87.2 L885 84 L897 84 L910 86 L925 88 L925 110 L905 110 L900 100 L893 97 L886 95 L878 93 L876.6 90Z" fill="#ababad"/><path d="M774 110 L781.3 98.4 L789.2 94.5 L805 92.5 L822.7 92.5 L832.5 93.5 L834.5 98.4 L846.3 102.4 L858 100.4 L870 98.4 L877.8 100.4 L887 110Z" fill="#ababad"/><path d="M817.9 46.3 L825.5 41.2 L837 33.5 L844.7 24.6 L857.5 20.8 L876.6 16.9 L885.6 19.5 L881.7 24.6 L883 33.5 L871.5 33 L861 35.5 L853.6 42.5 L850.4 46.3 L853 51.4 L849.8 57.8 L842.1 60.4 L837 57.8 L835.8 52.7 L829.4 52.7 L825.5 54 L820.4 52.7 L817.9 50.1Z" fill="#ffffff"/><path d="M871.5 33 L883 33.5 L888 42.5 L881.7 48.9 L876.6 51.4 L866 50.5 L861.3 46.3 L861.3 41.2 L869 37.4Z" fill="#ffffff"/><path d="M861.3 56.5 L868 54 L876.6 52.7 L879.2 59.1 L869 62.9 L861.3 60.4Z" fill="#ffffff"/><path d="M797 71 L805 69 L810 66 L818 64 L822 60 L826 60 L828 53.5 L833 53 L834 58 L838 62 L845 62.5 L855 61 L862 62 L867.7 64.2 L866.4 71.9 L876.6 74.4 L886.8 75.7 L881.7 79.5 L876.6 82.1 L876.6 87.2 L869 89.7 L863.9 92.3 L859 88 L856 83 L848 80.5 L843 80.5 L846 87 L848.5 91 L843.4 89.7 L837 84.6 L831 82 L826 81.5 L815 81 L806 80.5 L805 86.6 L801 92.5 L789.2 93.5 L781.3 90.6 L780.4 83.7 L791.2 81.7 L801 80 L801 76.8 L793.1 74.8Z" fill="#ffffff"/><path d="M789.2 54.1 L795.1 52.2 L799.1 57.1 L803 61 L807.9 65 L805 68.9 L793.1 69.9 L792.2 65.9 L795.1 63 L791.2 59.1Z" fill="#ffffff"/><path d="M778.4 64 L785.3 62 L788.2 65 L785.3 67.9 L779.4 66.9Z" fill="#ffffff"/><path d="M745.9 34.4 L753.8 32.5 L763.6 33.5 L769.5 36.4 L763.6 39.4 L753.8 40.4 L746.9 38.4Z" fill="#ffffff"/><path d="M826.5 86 L830.5 85.5 L831 90 L827 90.5Z" fill="#ffffff"/><path d="M839 91.5 L846 92 L845 94 L840 93.5Z" fill="#ffffff"/><path d="M866 95 L872 95 L872 96.5 L866 96.5Z" fill="#ffffff"/><path d="M817.9 50.1 L820.4 52.7 L825.5 54 L829.4 52.7 L829.4 54.6 L824 56 L819 54Z" fill="#fbe27a"/><path d="M826.4 57 L829 55.9 L833.6 56.5 L833.8 61.6 L828 61Z" fill="#f9de62"/><path d="M799.5 61.6 L805.7 62 L806.5 65.5 L801 65.8Z" fill="#fbe88f"/><path d="M814 64.6 L821.7 63.6 L821 66.4 L815 67.4Z" fill="#fdf0b0"/><path d="M861.3 59.9 L874 59.7 L872 62.9 L866 63.5 L861.5 61.5Z" fill="#fae382"/><path d="M815.3 78 L822 77 L833 77.5 L838.3 79 L836 83.4 L826 82.5 L817 82.5Z" fill="#fbe070"/><path d="M832 78.9 L838 78.5 L841.5 81.5 L844.7 85.9 L840 85.5 L835 82.5Z" fill="#f7c272"/><path d="M842 77.6 L852 77.2 L862 78.5 L865 82 L860 84.6 L852 84 L846 82Z" fill="#fbe37a"/><path d="M826.5 86 L830.5 85.5 L831 90 L827 90.5Z" fill="#f8cf7c"/><path d="M827 83.4 L829.6 83.4 L829.6 85.2 L827 85.2Z" fill="#fbe070"/><path d="M780.4 82.7 L784.3 83 L784.3 90.6 L781.3 90.6Z" fill="#fbe88a"/><path d="M791.6 73.2 L798.3 73.4 L798.3 75.2 L793 75.4Z" fill="#fbe88a"/><path d="M893.9 101.6 L897.9 101.6 L897.9 104 L893.9 104Z" fill="#f02020"/><path d="M898.6 101.6 L902.4 101.6 L902.4 104 L898.6 104Z" fill="#f8a030"/><path d="M903.4 101.6 L908 101.6 L908 104 L903.4 104Z" fill="#f8dc40"/><ellipse cx="754.2" cy="14.8" rx="3.5" ry="1.8" fill="#6685a8"/><ellipse cx="754.2" cy="19.1" rx="3.5" ry="1.8" fill="#6685a8"/><ellipse cx="754.2" cy="24.2" rx="3.5" ry="1.8" fill="#6685a8"/><rect x="745.6" y="13.5" width="2.4" height="6" fill="#a9a9ab"/><g stroke="#555" stroke-width="0.5" opacity="0.9"><path d="M826 48.5 H834 M838 50.5 H848 M866 41.5 H877 M818.7 69.3 H842 M822 71.8 H832 M850 67 H862 M807 77.2 H822 M824.6 76.4 H842 M846 75.8 H866 M850 73.2 H866 M870 76.4 H885 M866 82.7 H878 M787 89 H799 M858 89 H868 M752 36.2 H762 M783 64 H789 M809 67 H818 M870 52.8 H878 M868 56.7 H876 M888 96 H897 M846 79.3 H860 M838 85.3 H846 M858 85.3 H870 M866.5 59 H875"/></g></g><rect x="745.6" y="1.6" width="173" height="7.6" fill="#fff"/><rect x="745.6" y="105.4" width="173" height="4.6" fill="#fff"/><g filter="url(#bl2)"><ellipse cx="755.4" cy="5.9" rx="4.6" ry="1.5" fill="none" stroke="#a8b6c8" stroke-width="0.8"/><rect x="767" y="5.4" width="5.6" height="1" fill="#cfcfcf"/><rect x="778.5" y="5.4" width="5.6" height="1" fill="#cfcfcf"/><rect x="891.5" y="6.6" width="9.6" height="3.3" rx="1.3" fill="#fff"/><rect x="893.6" y="7.4" width="5" height="1.7" fill="#9db3cc"/><rect x="902.3" y="6.6" width="8.6" height="3.3" rx="1.3" fill="#fff"/><rect x="904.3" y="7.9" width="4.6" height="0.8" fill="#ccc"/><rect x="789" y="107.6" width="85" height="0.8" fill="#8a8a8a"/></g></g></svg>
<div style="left:23px;top:123px;width:715px;height:23px;background:#f3f3f3;"></div>
<span class="b" style="left:45.7px;top:123.86px;font-size:16px;color:#0b4b7d;">VSA OPOZORILA</span>
<span class="b" style="left:195.8px;top:123.86px;font-size:16px;color:#0b4b7d;">-</span>
<span class="b" style="left:223.5px;top:123.86px;font-size:16px;color:#0b4b7d;">danes</span>
<span class="b" style="left:291.9px;top:123.86px;font-size:16px;color:#0b4b7d;">-</span>
<span class="b" style="left:320.6px;top:123.86px;font-size:16px;color:#0b4b7d;">TOREK</span>
<span class="b" style="left:396.8px;top:123.86px;font-size:16px;color:#0b4b7d;">-</span>
<span class="b i" style="left:424.6px;top:123.86px;font-size:16px;color:#0b4b7d;">Slovenija</span>
<svg style="left:25px;top:152px;width:560px;height:334px" viewBox="25 152 560 334"><defs><filter id="tx" x="0" y="0" width="100%" height="100%"><feTurbulence type="fractalNoise" baseFrequency="0.05 0.16" numOctaves="3" seed="11"/>
<feColorMatrix type="matrix" values="0 0 0 0 0.835  0 0 0 0 0.835  0 0 0 0 0.835  9 0 0 0 -4.9"/></filter>
<filter id="tw" x="0" y="0" width="100%" height="100%"><feTurbulence type="fractalNoise" baseFrequency="0.05 0.16" numOctaves="3" seed="11"/>
<feColorMatrix type="matrix" values="0 0 0 0 0.985  0 0 0 0 0.985  0 0 0 0 0.985  -9 0 0 0 4.0"/></filter>
<filter id="b2"><feGaussianBlur stdDeviation="14"/></filter>
<linearGradient id="tg" gradientUnits="userSpaceOnUse" x1="120" y1="170" x2="520" y2="470"><stop offset="0" stop-color="#fff"/><stop offset="0.5" stop-color="#aaa"/><stop offset="1" stop-color="#2a2a2a"/></linearGradient>
<linearGradient id="bg1" gradientUnits="userSpaceOnUse" x1="120" y1="170" x2="520" y2="470"><stop offset="0" stop-color="#eeeeee"/><stop offset="0.6" stop-color="#f3f3f3"/><stop offset="1" stop-color="#f5f5f5"/></linearGradient>
<mask id="tm" maskUnits="userSpaceOnUse" x="25" y="152" width="560" height="334"><rect x="25" y="152" width="560" height="334" fill="url(#tg)"/></mask></defs><rect x="25" y="152" width="560" height="334" fill="url(#bg1)"/><g mask="url(#tm)"><g transform="rotate(-32 305 320)"><rect x="-100" y="-50" width="860" height="760" filter="url(#tw)"/><rect x="-100" y="-50" width="860" height="760" filter="url(#tx)"/></g></g><path d="M25 433 L33 428 L31 420 L29 416 L37 406 L45 404 L51 408 L61 409 L71 412 L77 416 L79 422 L85 423 L93 418 L101 412 L99 406 L102 400 L109 400 L115 406 L125 414 L129 420 L128 436 L137 440 L133 444 L125 452 L113 456 L105 458 L107 466 L97 464 L95 472 L99 486 L25 486Z" fill="#dde5ea" stroke="#9fb0c4" stroke-width="1"/><g fill="none" stroke="#7a93b5" stroke-width="1"><path d="M25 219 Q40 222 52 228 Q62 226 72 224 Q84 226 96 228 Q108 232 120 235 L129 236"/><path d="M129 236 Q180 240 200 254 Q230 252 262 268" stroke="#a8a8a8" stroke-width="1.6"/><path d="M508 152 Q504 158 500 160" /><path d="M577 246 L586 249"/></g><g fill="#b9c7d8" stroke="none"><path d="M156 208 L174 198 L176 200 L158 211Z"/><path d="M180 213 Q192 208 200 213 Q208 216 212 213 L212 216 Q204 219 196 216 Q188 213 181 216Z"/><path d="M104 176 L114 181 L112 183 L102 178Z"/><path d="M257 214 L276 207 L277 209 L258 216Z"/><rect x="160" y="222" width="4" height="5"/></g><path d="M129 236 L137 238 L145 237 L161 239 L175 244 L185 242 L193 246 L199 253 L205 256 L213 255 L225 254 L241 254 L247 259 L255 259 L261 267 L262 269 L265 264 L264 258 L279 250 L287 243 L299 239 L303 230 L308 220 L315 216 L322 211 L327 215 L335 209 L345 207 L360 209 L375 207.5 L395 207.5 L401 215 L410 213 L415 203 L425 199 L431 195.5 L446 196 L456 191 L467 191 L477 197 L485 199 L490 205 L489 196 L483 188 L483 169 L491 165 L501 160 L513 161 L523 157 L532 158 L539 166 L535 176 L539 186 L545 194 L552 198 L547 208 L557 218 L567 230 L569 238 L577 245 L587 249 L575 249 L565 248 L559 240 L549 233 L543 230 L537 234 L527 239 L522 244 L527 252 L529 260 L533 264 L531 269 L521 268 L511 264 L499 267 L495 272 L497 276 L489 280 L485 284 L469 292 L457 296 L453 302 L449 304 L433 305 L429 312 L424 320 L426 330 L434 337 L443 342 L440 352 L441 366 L437 376 L439 386 L429 390 L417 388 L407 392 L401 398 L389 404 L377 409 L371 416 L377 422 L381 418 L387 424 L393 431 L381 434 L375 442 L379 454 L385 462 L389 468 L381 474 L367 478 L357 481 L349 474 L341 470 L333 468 L321 460 L315 468 L305 472 L297 466 L289 458 L281 456 L281 448 L273 440 L267 430 L261 428 L255 438 L251 450 L241 460 L231 468 L223 470 L213 466 L207 466 L201 470 L191 464 L179 460 L169 464 L165 472 L155 480 L145 480 L133 478 L119 476 L109 470 L109 464 L105 458 L113 456 L125 454 L135 452 L129 448 L133 444 L143 446 L153 442 L159 434 L155 428 L147 418 L137 406 L125 398 L113 394 L107 388 L109 378 L115 362 L111 356 L99 358 L93 350 L94 340 L101 334 L113 324 L121 315 L115 311 L105 309 L91 303 L82 305 L82 298 L76.6 288 L84 280 L85 273 L93 269 L105 264 L111 256 L125 252 L128 242 L129 236Z" fill="none" stroke="#b4b4b4" stroke-width="3" stroke-linejoin="round"/><path d="M129 236 L137 238 L145 237 L161 239 L175 244 L185 242 L193 246 L199 253 L205 256 L213 255 L225 254 L241 254 L247 259 L255 259 L261 267 L262 269 L271 273 L277 284 L283 292 L287 296 L303 298 L317 304.5 L307 307 L293 308 L281 307 L269 310 L263 306 L259 301 L253 306 L239 312 L233 320 L225 324 L221 330 L213 328 L211 330 L207 334 L205 346 L199 350 L191 358 L189 370 L191 379 L177 376 L165 368 L157 360 L149 350 L145 338 L141 330 L133 326 L121 315 L115 311 L105 309 L91 303 L82 305 L82 298 L76.6 288 L84 280 L85 273 L93 269 L105 264 L111 256 L125 252 L128 242 L129 236Z" fill="#fccf44" stroke="#fccf44" stroke-width="0.8" stroke-linejoin="round"/><path d="M121 315 L113 324 L101 334 L94 340 L93 350 L99 358 L111 356 L115 362 L109 378 L107 388 L113 394 L125 398 L137 406 L147 418 L155 428 L159 434 L153 442 L143 446 L133 444 L129 448 L135 452 L125 454 L113 456 L105 458 L109 464 L109 470 L119 476 L133 478 L145 480 L155 480 L165 472 L169 464 L179 460 L191 464 L201 470 L207 466 L213 466 L223 470 L231 468 L241 460 L251 450 L255 438 L261 428 L261 420 L259 410 L260 400 L255 390 L251 382 L239 383 L231 380 L221 376 L213 366 L207 360 L209 352 L205 346 L199 350 L191 358 L189 370 L191 379 L177 376 L165 368 L157 360 L149 350 L145 338 L141 330 L133 326 L121 315Z" fill="#fccf44" stroke="#fccf44" stroke-width="0.8" stroke-linejoin="round"/><path d="M262 269 L265 264 L264 258 L279 250 L287 243 L299 239 L303 230 L308 220 L315 216 L322 211 L327 215 L335 209 L345 207 L360 209 L375 207.5 L395 207.5 L401 215 L410 213 L415 203 L425 199 L431 195.5 L446 196 L456 191 L467 191 L477 197 L485 199 L490 205 L489 196 L483 188 L483 169 L491 165 L501 160 L513 161 L523 157 L532 158 L539 166 L535 176 L539 186 L545 194 L552 198 L547 208 L557 218 L567 230 L569 238 L577 245 L587 249 L575 249 L565 248 L559 240 L549 233 L543 230 L537 234 L527 239 L522 244 L527 252 L529 260 L533 264 L531 269 L521 268 L511 264 L499 267 L495 272 L497 276 L489 280 L485 284 L469 292 L457 296 L453 302 L449 304 L433 305 L429 312 L424 320 L426 330 L434 337 L443 342 L441 342 L429 346 L421 351 L415 346 L409 340 L397 337 L381 338 L367 334 L355 331 L356 324 L353 318 L347 311 L333 309 L317 304.5 L303 298 L287 296 L283 292 L277 284 L271 273 L262 269Z" fill="#fdfd46" stroke="#fdfd46" stroke-width="0.8" stroke-linejoin="round"/><path d="M355 331 L367 334 L381 338 L397 337 L409 340 L415 346 L421 351 L429 346 L441 342 L443 342 L440 352 L441 366 L437 376 L439 386 L429 390 L417 388 L407 392 L401 398 L389 404 L377 409 L371 416 L377 422 L381 418 L387 424 L393 431 L381 434 L375 442 L379 454 L385 462 L389 468 L381 474 L367 478 L357 481 L349 474 L341 470 L333 468 L321 460 L315 468 L305 472 L297 466 L289 458 L281 456 L281 448 L273 440 L267 430 L261 428 L261 420 L259 410 L260 400 L255 390 L251 382 L257 380 L265 376 L271 380 L281 379 L287 376 L289 368 L285 360 L289 354 L301 352 L309 356 L317 360 L329 359 L335 352 L345 348 L341 342 L345 336 L355 331Z" fill="#fdfd46" stroke="#fdfd46" stroke-width="0.8" stroke-linejoin="round"/><path d="M205 346 L207 334 L211 330 L213 328 L221 330 L225 324 L233 320 L239 312 L253 306 L259 301 L263 306 L269 310 L281 307 L293 308 L307 307 L317 304.5 L333 309 L347 311 L353 318 L356 324 L355 331 L345 336 L341 342 L345 348 L335 352 L329 359 L317 360 L309 356 L301 352 L289 354 L285 360 L289 368 L287 376 L281 379 L271 380 L265 376 L257 380 L251 382 L239 383 L231 380 L221 376 L213 366 L207 360 L209 352 L205 346Z" fill="#fdfd46" stroke="#fdfd46" stroke-width="0.8" stroke-linejoin="round"/><path d="M205 346 L199 350 L191 358 L189 370 L191 379 L177 376 L165 368 L157 360 L149 350 L145 338 L141 330 L133 326 L121 315" fill="none" stroke="#ecb836" stroke-width="1.8" stroke-linejoin="round"/><path d="M355 331 L356 324 L353 318 L347 311 L333 309 L317 304.5" fill="none" stroke="#efec3e" stroke-width="1.8" stroke-linejoin="round"/><path d="M443 342 L441 342 L429 346 L421 351 L415 346 L409 340 L397 337 L381 338 L367 334 L355 331" fill="none" stroke="#efec3e" stroke-width="1.8" stroke-linejoin="round"/><path d="M251 382 L257 380 L265 376 L271 380 L281 379 L287 376 L289 368 L285 360 L289 354 L301 352 L309 356 L317 360 L329 359 L335 352 L345 348 L341 342 L345 336 L355 331" fill="none" stroke="#efec3e" stroke-width="1.8" stroke-linejoin="round"/><path d="M317 304.5 L303 298 L287 296 L283 292 L277 284 L271 273 L262 269" fill="none" stroke="#f2c038" stroke-width="1.5" stroke-linejoin="round"/><path d="M317 304.5 L307 307 L293 308 L281 307 L269 310 L263 306 L259 301 L253 306 L239 312 L233 320 L225 324 L221 330 L213 328 L211 330 L207 334 L205 346" fill="none" stroke="#f2c038" stroke-width="1.5" stroke-linejoin="round"/><path d="M251 382 L239 383 L231 380 L221 376 L213 366 L207 360 L209 352 L205 346" fill="none" stroke="#f2c038" stroke-width="1.5" stroke-linejoin="round"/><path d="M261 428 L261 420 L259 410 L260 400 L255 390 L251 382" fill="none" stroke="#f2c038" stroke-width="1.5" stroke-linejoin="round"/><g fill="none" stroke="#bfe9a0" stroke-width="0.8" opacity="0.9"><rect x="383.5" y="241" width="21" height="21"/><rect x="404.5" y="241" width="21" height="21"/><rect x="170" y="284" width="21" height="20"/><rect x="312" y="390" width="20.4" height="20.4"/></g><rect x="25" y="152" width="14" height="14.5" fill="#5ddc84"/><rect x="39" y="152" width="14.5" height="14.5" fill="#fafa40"/><rect x="25" y="166.5" width="14" height="14.5" fill="#f6cf62"/><rect x="39" y="166.5" width="14.5" height="14.5" fill="#f84848"/><rect x="25.5" y="152.5" width="559" height="333" fill="none" stroke="#a6a6a6" stroke-width="1.4"/></svg>
<span class="dv" style="left:97px;top:162.13px;font-size:14.5px;color:#3c3c3c;-webkit-text-stroke:0.35px #3c3c3c;">24.</span>
<span class="dv" style="left:125px;top:162.13px;font-size:14.5px;color:#3c3c3c;-webkit-text-stroke:0.35px #3c3c3c;letter-spacing:0.3px;">10.2023</span>
<span class="dv" style="left:195px;top:162.13px;font-size:14.5px;color:#3c3c3c;-webkit-text-stroke:0.35px #3c3c3c;">11h</span>
<span class="dv" style="left:234px;top:162.13px;font-size:14.5px;color:#3c3c3c;-webkit-text-stroke:0.35px #3c3c3c;">--</span>
<span class="dv" style="left:254.5px;top:162.13px;font-size:14.5px;color:#3c3c3c;-webkit-text-stroke:0.35px #3c3c3c;">25.</span>
<span class="dv" style="left:283px;top:162.13px;font-size:14.5px;color:#3c3c3c;-webkit-text-stroke:0.35px #3c3c3c;letter-spacing:0.3px;">10.2023</span>
<span class="dv" style="left:353.5px;top:162.13px;font-size:14.5px;color:#3c3c3c;-webkit-text-stroke:0.35px #3c3c3c;">00h</span>
<span class="dv" style="left:405.5px;top:162.13px;font-size:14.5px;color:#3c3c3c;-webkit-text-stroke:0.35px #3c3c3c;">(CET)</span>
<span class="dv" style="left:446.8px;top:441.81px;font-size:10.5px;color:#555;letter-spacing:0.3px;">ARSO vreme</span>
<span class="dv" style="left:425px;top:458.81px;font-size:10.5px;color:#555;letter-spacing:0.12px;">24. 10.2023&nbsp; 11:01 CET</span>
<svg class="ic" style="left:362.3px;top:240.7px;width:21px;height:21px;background:#fdfd46;--bg:#fdfd46;border:1.8px solid #50545f;color:#4a4f62;" viewBox="4.97 4.97 21.05 21.05"><use href="#i-wind" x="0" y="0" width="31" height="31" opacity="0.85"/></svg>
<svg class="ic" style="left:128.3px;top:283.4px;width:21px;height:21px;background:#fdfd46;--bg:#fdfd46;border:1.8px solid #50545f;color:#4a4f62;" viewBox="4.97 4.97 21.05 21.05"><use href="#i-wind" x="0" y="0" width="31" height="31" opacity="0.85"/></svg>
<svg class="ic" style="left:149px;top:283.4px;width:21px;height:21px;background:#fccf44;--bg:#fccf44;border:1.8px solid #50545f;color:#4a4f62;" viewBox="4.97 4.97 21.05 21.05"><use href="#i-rain" x="0" y="0" width="31" height="31" opacity="0.85"/></svg>
<svg class="ic" style="left:242.5px;top:329.7px;width:21px;height:21px;background:#fdfd46;--bg:#fdfd46;border:1.8px solid #50545f;color:#4a4f62;" viewBox="4.97 4.97 21.05 21.05"><use href="#i-rain" x="0" y="0" width="31" height="31" opacity="0.85"/></svg>
<svg class="ic" style="left:263px;top:329.7px;width:21px;height:21px;background:#fdfd46;--bg:#fdfd46;border:1.8px solid #50545f;color:#4a4f62;" viewBox="4.97 4.97 21.05 21.05"><use href="#i-storm" x="0" y="0" width="31" height="31" opacity="0.85"/></svg>
<svg class="ic" style="left:332.3px;top:389.6px;width:21px;height:21px;background:#fdfd46;--bg:#fdfd46;border:1.8px solid #50545f;color:#4a4f62;" viewBox="4.97 4.97 21.05 21.05"><use href="#i-storm" x="0" y="0" width="31" height="31" opacity="0.85"/></svg>
<svg class="ic" style="left:127.3px;top:396.8px;width:21px;height:21px;background:#fccf44;--bg:#fccf44;border:1.8px solid #50545f;color:#4a4f62;" viewBox="4.97 4.97 21.05 21.05"><use href="#i-wind" x="0" y="0" width="31" height="31" opacity="0.85"/></svg>
<svg class="ic" style="left:148px;top:396.8px;width:21px;height:21px;background:#fccf44;--bg:#fccf44;border:1.8px solid #50545f;color:#4a4f62;" viewBox="4.97 4.97 21.05 21.05"><use href="#i-rain" x="0" y="0" width="31" height="31" opacity="0.85"/></svg>
<svg class="ic" style="left:168.6px;top:396.8px;width:21px;height:21px;background:#fdfd46;--bg:#fdfd46;border:1.8px solid #50545f;color:#4a4f62;" viewBox="4.97 4.97 21.05 21.05"><use href="#i-storm" x="0" y="0" width="31" height="31" opacity="0.85"/></svg>
<svg class="ic" style="left:127.3px;top:417.2px;width:21px;height:21px;background:#fdfd46;--bg:#fdfd46;border:1.8px solid #50545f;color:#4a4f62;" viewBox="4.97 4.97 21.05 21.05"><use href="#i-coast" x="0" y="0" width="31" height="31" opacity="0.85"/></svg>
<div style="left:588px;top:152px;width:150px;height:82px;background:#f3f3f3;"></div>
<span class="b c" style="left:588px;top:153.46px;font-size:12.8px;width:150px;color:#333;">00h - 06h</span>
<svg style="left:616.4px;top:167.2px;width:101.1px;height:65.7px" viewBox="76 156 512 326" preserveAspectRatio="none" shape-rendering="crispEdges"><path d="M129 236 L137 238 L145 237 L161 239 L175 244 L185 242 L193 246 L199 253 L205 256 L213 255 L225 254 L241 254 L247 259 L255 259 L261 267 L262 269 L271 273 L277 284 L283 292 L287 296 L303 298 L317 304.5 L307 307 L293 308 L281 307 L269 310 L263 306 L259 301 L253 306 L239 312 L233 320 L225 324 L221 330 L213 328 L211 330 L207 334 L205 346 L199 350 L191 358 L189 370 L191 379 L177 376 L165 368 L157 360 L149 350 L145 338 L141 330 L133 326 L121 315 L115 311 L105 309 L91 303 L82 305 L82 298 L76.6 288 L84 280 L85 273 L93 269 L105 264 L111 256 L125 252 L128 242 L129 236Z" fill="#ffff00" stroke="#ffff00" stroke-width="2"/><path d="M262 269 L265 264 L264 258 L279 250 L287 243 L299 239 L303 230 L308 220 L315 216 L322 211 L327 215 L335 209 L345 207 L360 209 L375 207.5 L395 207.5 L401 215 L410 213 L415 203 L425 199 L431 195.5 L446 196 L456 191 L467 191 L477 197 L485 199 L490 205 L489 196 L483 188 L483 169 L491 165 L501 160 L513 161 L523 157 L532 158 L539 166 L535 176 L539 186 L545 194 L552 198 L547 208 L557 218 L567 230 L569 238 L577 245 L587 249 L575 249 L565 248 L559 240 L549 233 L543 230 L537 234 L527 239 L522 244 L527 252 L529 260 L533 264 L531 269 L521 268 L511 264 L499 267 L495 272 L497 276 L489 280 L485 284 L469 292 L457 296 L453 302 L449 304 L433 305 L429 312 L424 320 L426 330 L434 337 L443 342 L441 342 L429 346 L421 351 L415 346 L409 340 L397 337 L381 338 L367 334 L355 331 L356 324 L353 318 L347 311 L333 309 L317 304.5 L303 298 L287 296 L283 292 L277 284 L271 273 L262 269Z" fill="#ffff00" stroke="#ffff00" stroke-width="2"/><path d="M121 315 L113 324 L101 334 L94 340 L93 350 L99 358 L111 356 L115 362 L109 378 L107 388 L113 394 L125 398 L137 406 L147 418 L155 428 L159 434 L153 442 L143 446 L133 444 L129 448 L135 452 L125 454 L113 456 L105 458 L109 464 L109 470 L119 476 L133 478 L145 480 L155 480 L165 472 L169 464 L179 460 L191 464 L201 470 L207 466 L213 466 L223 470 L231 468 L241 460 L251 450 L255 438 L261 428 L261 420 L259 410 L260 400 L255 390 L251 382 L239 383 L231 380 L221 376 L213 366 L207 360 L209 352 L205 346 L199 350 L191 358 L189 370 L191 379 L177 376 L165 368 L157 360 L149 350 L145 338 L141 330 L133 326 L121 315Z" fill="#ffc400" stroke="#ffc400" stroke-width="2"/><path d="M355 331 L367 334 L381 338 L397 337 L409 340 L415 346 L421 351 L429 346 L441 342 L443 342 L440 352 L441 366 L437 376 L439 386 L429 390 L417 388 L407 392 L401 398 L389 404 L377 409 L371 416 L377 422 L381 418 L387 424 L393 431 L381 434 L375 442 L379 454 L385 462 L389 468 L381 474 L367 478 L357 481 L349 474 L341 470 L333 468 L321 460 L315 468 L305 472 L297 466 L289 458 L281 456 L281 448 L273 440 L267 430 L261 428 L261 420 L259 410 L260 400 L255 390 L251 382 L257 380 L265 376 L271 380 L281 379 L287 376 L289 368 L285 360 L289 354 L301 352 L309 356 L317 360 L329 359 L335 352 L345 348 L341 342 L345 336 L355 331Z" fill="#29d660" stroke="#29d660" stroke-width="2"/><path d="M205 346 L207 334 L211 330 L213 328 L221 330 L225 324 L233 320 L239 312 L253 306 L259 301 L263 306 L269 310 L281 307 L293 308 L307 307 L317 304.5 L333 309 L347 311 L353 318 L356 324 L355 331 L345 336 L341 342 L345 348 L335 352 L329 359 L317 360 L309 356 L301 352 L289 354 L285 360 L289 368 L287 376 L281 379 L271 380 L265 376 L257 380 L251 382 L239 383 L231 380 L221 376 L213 366 L207 360 L209 352 L205 346Z" fill="#ffff00" stroke="#ffff00" stroke-width="2"/><path d="M130.4 287.1 h5 v4.5 h7 v-4.5 h5 v14 h-5 v-4.5 h-7 v4.5 h-5z" fill="#151515"/><path d="M244.6 333.5 h5 v4.5 h7 v-4.5 h5 v14 h-5 v-4.5 h-7 v4.5 h-5z" fill="#151515"/><path d="M129.4 400.5 h5 v4.5 h7 v-4.5 h5 v14 h-5 v-4.5 h-7 v4.5 h-5z" fill="#151515"/><rect x="365.3" y="244.5" width="7" height="7" fill="#333"/><rect x="384.3" y="241.5" width="22" height="20" fill="none" stroke="#b8ee70" stroke-width="2.5"/></svg>
<div style="left:588px;top:235.5px;width:150px;height:82px;background:#f3f3f3;"></div>
<span class="b c" style="left:588px;top:236.96px;font-size:12.8px;width:150px;color:#333;">06h - 12h</span>
<svg style="left:616.4px;top:250.7px;width:101.1px;height:65.7px" viewBox="76 156 512 326" preserveAspectRatio="none" shape-rendering="crispEdges"><path d="M129 236 L137 238 L145 237 L161 239 L175 244 L185 242 L193 246 L199 253 L205 256 L213 255 L225 254 L241 254 L247 259 L255 259 L261 267 L262 269 L271 273 L277 284 L283 292 L287 296 L303 298 L317 304.5 L307 307 L293 308 L281 307 L269 310 L263 306 L259 301 L253 306 L239 312 L233 320 L225 324 L221 330 L213 328 L211 330 L207 334 L205 346 L199 350 L191 358 L189 370 L191 379 L177 376 L165 368 L157 360 L149 350 L145 338 L141 330 L133 326 L121 315 L115 311 L105 309 L91 303 L82 305 L82 298 L76.6 288 L84 280 L85 273 L93 269 L105 264 L111 256 L125 252 L128 242 L129 236Z" fill="#ffc400" stroke="#ffc400" stroke-width="2"/><path d="M262 269 L265 264 L264 258 L279 250 L287 243 L299 239 L303 230 L308 220 L315 216 L322 211 L327 215 L335 209 L345 207 L360 209 L375 207.5 L395 207.5 L401 215 L410 213 L415 203 L425 199 L431 195.5 L446 196 L456 191 L467 191 L477 197 L485 199 L490 205 L489 196 L483 188 L483 169 L491 165 L501 160 L513 161 L523 157 L532 158 L539 166 L535 176 L539 186 L545 194 L552 198 L547 208 L557 218 L567 230 L569 238 L577 245 L587 249 L575 249 L565 248 L559 240 L549 233 L543 230 L537 234 L527 239 L522 244 L527 252 L529 260 L533 264 L531 269 L521 268 L511 264 L499 267 L495 272 L497 276 L489 280 L485 284 L469 292 L457 296 L453 302 L449 304 L433 305 L429 312 L424 320 L426 330 L434 337 L443 342 L441 342 L429 346 L421 351 L415 346 L409 340 L397 337 L381 338 L367 334 L355 331 L356 324 L353 318 L347 311 L333 309 L317 304.5 L303 298 L287 296 L283 292 L277 284 L271 273 L262 269Z" fill="#ffff00" stroke="#ffff00" stroke-width="2"/><path d="M121 315 L113 324 L101 334 L94 340 L93 350 L99 358 L111 356 L115 362 L109 378 L107 388 L113 394 L125 398 L137 406 L147 418 L155 428 L159 434 L153 442 L143 446 L133 444 L129 448 L135 452 L125 454 L113 456 L105 458 L109 464 L109 470 L119 476 L133 478 L145 480 L155 480 L165 472 L169 464 L179 460 L191 464 L201 470 L207 466 L213 466 L223 470 L231 468 L241 460 L251 450 L255 438 L261 428 L261 420 L259 410 L260 400 L255 390 L251 382 L239 383 L231 380 L221 376 L213 366 L207 360 L209 352 L205 346 L199 350 L191 358 L189 370 L191 379 L177 376 L165 368 L157 360 L149 350 L145 338 L141 330 L133 326 L121 315Z" fill="#ffc400" stroke="#ffc400" stroke-width="2"/><path d="M355 331 L367 334 L381 338 L397 337 L409 340 L415 346 L421 351 L429 346 L441 342 L443 342 L440 352 L441 366 L437 376 L439 386 L429 390 L417 388 L407 392 L401 398 L389 404 L377 409 L371 416 L377 422 L381 418 L387 424 L393 431 L381 434 L375 442 L379 454 L385 462 L389 468 L381 474 L367 478 L357 481 L349 474 L341 470 L333 468 L321 460 L315 468 L305 472 L297 466 L289 458 L281 456 L281 448 L273 440 L267 430 L261 428 L261 420 L259 410 L260 400 L255 390 L251 382 L257 380 L265 376 L271 380 L281 379 L287 376 L289 368 L285 360 L289 354 L301 352 L309 356 L317 360 L329 359 L335 352 L345 348 L341 342 L345 336 L355 331Z" fill="#29d660" stroke="#29d660" stroke-width="2"/><path d="M205 346 L207 334 L211 330 L213 328 L221 330 L225 324 L233 320 L239 312 L253 306 L259 301 L263 306 L269 310 L281 307 L293 308 L307 307 L317 304.5 L333 309 L347 311 L353 318 L356 324 L355 331 L345 336 L341 342 L345 348 L335 352 L329 359 L317 360 L309 356 L301 352 L289 354 L285 360 L289 368 L287 376 L281 379 L271 380 L265 376 L257 380 L251 382 L239 383 L231 380 L221 376 L213 366 L207 360 L209 352 L205 346Z" fill="#ffff00" stroke="#ffff00" stroke-width="2"/><path d="M130.4 287.1 h5 v4.5 h7 v-4.5 h5 v14 h-5 v-4.5 h-7 v4.5 h-5z" fill="#151515"/><path d="M151 287.1 h5 v4.5 h7 v-4.5 h5 v14 h-5 v-4.5 h-7 v4.5 h-5z" fill="#151515"/><path d="M244.6 333.5 h5 v4.5 h7 v-4.5 h5 v14 h-5 v-4.5 h-7 v4.5 h-5z" fill="#151515"/><path d="M129.4 400.5 h5 v4.5 h7 v-4.5 h5 v14 h-5 v-4.5 h-7 v4.5 h-5z" fill="#151515"/><path d="M150 400.5 h5 v4.5 h7 v-4.5 h5 v14 h-5 v-4.5 h-7 v4.5 h-5z" fill="#151515"/><rect x="365.3" y="244.5" width="7" height="7" fill="#333"/><rect x="384.3" y="241.5" width="22" height="20" fill="none" stroke="#b8ee70" stroke-width="2.5"/></svg>
<div style="left:588px;top:319px;width:150px;height:82px;background:#f3f3f3;"></div>
<span class="b c" style="left:588px;top:320.46px;font-size:12.8px;width:150px;color:#333;">12h - 18h</span>
<svg style="left:616.4px;top:334.2px;width:101.1px;height:65.7px" viewBox="76 156 512 326" preserveAspectRatio="none" shape-rendering="crispEdges"><path d="M129 236 L137 238 L145 237 L161 239 L175 244 L185 242 L193 246 L199 253 L205 256 L213 255 L225 254 L241 254 L247 259 L255 259 L261 267 L262 269 L271 273 L277 284 L283 292 L287 296 L303 298 L317 304.5 L307 307 L293 308 L281 307 L269 310 L263 306 L259 301 L253 306 L239 312 L233 320 L225 324 L221 330 L213 328 L211 330 L207 334 L205 346 L199 350 L191 358 L189 370 L191 379 L177 376 L165 368 L157 360 L149 350 L145 338 L141 330 L133 326 L121 315 L115 311 L105 309 L91 303 L82 305 L82 298 L76.6 288 L84 280 L85 273 L93 269 L105 264 L111 256 L125 252 L128 242 L129 236Z" fill="#ffc400" stroke="#ffc400" stroke-width="2"/><path d="M262 269 L265 264 L264 258 L279 250 L287 243 L299 239 L303 230 L308 220 L315 216 L322 211 L327 215 L335 209 L345 207 L360 209 L375 207.5 L395 207.5 L401 215 L410 213 L415 203 L425 199 L431 195.5 L446 196 L456 191 L467 191 L477 197 L485 199 L490 205 L489 196 L483 188 L483 169 L491 165 L501 160 L513 161 L523 157 L532 158 L539 166 L535 176 L539 186 L545 194 L552 198 L547 208 L557 218 L567 230 L569 238 L577 245 L587 249 L575 249 L565 248 L559 240 L549 233 L543 230 L537 234 L527 239 L522 244 L527 252 L529 260 L533 264 L531 269 L521 268 L511 264 L499 267 L495 272 L497 276 L489 280 L485 284 L469 292 L457 296 L453 302 L449 304 L433 305 L429 312 L424 320 L426 330 L434 337 L443 342 L441 342 L429 346 L421 351 L415 346 L409 340 L397 337 L381 338 L367 334 L355 331 L356 324 L353 318 L347 311 L333 309 L317 304.5 L303 298 L287 296 L283 292 L277 284 L271 273 L262 269Z" fill="#ffff00" stroke="#ffff00" stroke-width="2"/><path d="M121 315 L113 324 L101 334 L94 340 L93 350 L99 358 L111 356 L115 362 L109 378 L107 388 L113 394 L125 398 L137 406 L147 418 L155 428 L159 434 L153 442 L143 446 L133 444 L129 448 L135 452 L125 454 L113 456 L105 458 L109 464 L109 470 L119 476 L133 478 L145 480 L155 480 L165 472 L169 464 L179 460 L191 464 L201 470 L207 466 L213 466 L223 470 L231 468 L241 460 L251 450 L255 438 L261 428 L261 420 L259 410 L260 400 L255 390 L251 382 L239 383 L231 380 L221 376 L213 366 L207 360 L209 352 L205 346 L199 350 L191 358 L189 370 L191 379 L177 376 L165 368 L157 360 L149 350 L145 338 L141 330 L133 326 L121 315Z" fill="#ffc400" stroke="#ffc400" stroke-width="2"/><path d="M355 331 L367 334 L381 338 L397 337 L409 340 L415 346 L421 351 L429 346 L441 342 L443 342 L440 352 L441 366 L437 376 L439 386 L429 390 L417 388 L407 392 L401 398 L389 404 L377 409 L371 416 L377 422 L381 418 L387 424 L393 431 L381 434 L375 442 L379 454 L385 462 L389 468 L381 474 L367 478 L357 481 L349 474 L341 470 L333 468 L321 460 L315 468 L305 472 L297 466 L289 458 L281 456 L281 448 L273 440 L267 430 L261 428 L261 420 L259 410 L260 400 L255 390 L251 382 L257 380 L265 376 L271 380 L281 379 L287 376 L289 368 L285 360 L289 354 L301 352 L309 356 L317 360 L329 359 L335 352 L345 348 L341 342 L345 336 L355 331Z" fill="#29d660" stroke="#29d660" stroke-width="2"/><path d="M205 346 L207 334 L211 330 L213 328 L221 330 L225 324 L233 320 L239 312 L253 306 L259 301 L263 306 L269 310 L281 307 L293 308 L307 307 L317 304.5 L333 309 L347 311 L353 318 L356 324 L355 331 L345 336 L341 342 L345 348 L335 352 L329 359 L317 360 L309 356 L301 352 L289 354 L285 360 L289 368 L287 376 L281 379 L271 380 L265 376 L257 380 L251 382 L239 383 L231 380 L221 376 L213 366 L207 360 L209 352 L205 346Z" fill="#ffff00" stroke="#ffff00" stroke-width="2"/><path d="M130.4 287.1 h5 v4.5 h7 v-4.5 h5 v14 h-5 v-4.5 h-7 v4.5 h-5z" fill="#151515"/><path d="M151 287.1 h5 v4.5 h7 v-4.5 h5 v14 h-5 v-4.5 h-7 v4.5 h-5z" fill="#151515"/><path d="M244.6 333.5 h5 v4.5 h7 v-4.5 h5 v14 h-5 v-4.5 h-7 v4.5 h-5z" fill="#151515"/><path d="M265 333.5 h5 v4.5 h7 v-4.5 h5 v14 h-5 v-4.5 h-7 v4.5 h-5z" fill="#151515"/><path d="M129.4 400.5 h5 v4.5 h7 v-4.5 h5 v14 h-5 v-4.5 h-7 v4.5 h-5z" fill="#151515"/><path d="M150 400.5 h5 v4.5 h7 v-4.5 h5 v14 h-5 v-4.5 h-7 v4.5 h-5z" fill="#151515"/><path d="M170.6 400.5 h5 v4.5 h7 v-4.5 h5 v14 h-5 v-4.5 h-7 v4.5 h-5z" fill="#151515"/><rect x="365.3" y="244.5" width="7" height="7" fill="#333"/><rect x="384.3" y="241.5" width="22" height="20" fill="none" stroke="#b8ee70" stroke-width="2.5"/></svg>
<div style="left:588px;top:402.5px;width:150px;height:82px;background:#f3f3f3;"></div>
<span class="b c" style="left:588px;top:403.96px;font-size:12.8px;width:150px;color:#333;">18h - 24h</span>
<svg style="left:616.4px;top:417.7px;width:101.1px;height:65.7px" viewBox="76 156 512 326" preserveAspectRatio="none" shape-rendering="crispEdges"><path d="M129 236 L137 238 L145 237 L161 239 L175 244 L185 242 L193 246 L199 253 L205 256 L213 255 L225 254 L241 254 L247 259 L255 259 L261 267 L262 269 L271 273 L277 284 L283 292 L287 296 L303 298 L317 304.5 L307 307 L293 308 L281 307 L269 310 L263 306 L259 301 L253 306 L239 312 L233 320 L225 324 L221 330 L213 328 L211 330 L207 334 L205 346 L199 350 L191 358 L189 370 L191 379 L177 376 L165 368 L157 360 L149 350 L145 338 L141 330 L133 326 L121 315 L115 311 L105 309 L91 303 L82 305 L82 298 L76.6 288 L84 280 L85 273 L93 269 L105 264 L111 256 L125 252 L128 242 L129 236Z" fill="#ffc400" stroke="#ffc400" stroke-width="2"/><path d="M262 269 L265 264 L264 258 L279 250 L287 243 L299 239 L303 230 L308 220 L315 216 L322 211 L327 215 L335 209 L345 207 L360 209 L375 207.5 L395 207.5 L401 215 L410 213 L415 203 L425 199 L431 195.5 L446 196 L456 191 L467 191 L477 197 L485 199 L490 205 L489 196 L483 188 L483 169 L491 165 L501 160 L513 161 L523 157 L532 158 L539 166 L535 176 L539 186 L545 194 L552 198 L547 208 L557 218 L567 230 L569 238 L577 245 L587 249 L575 249 L565 248 L559 240 L549 233 L543 230 L537 234 L527 239 L522 244 L527 252 L529 260 L533 264 L531 269 L521 268 L511 264 L499 267 L495 272 L497 276 L489 280 L485 284 L469 292 L457 296 L453 302 L449 304 L433 305 L429 312 L424 320 L426 330 L434 337 L443 342 L441 342 L429 346 L421 351 L415 346 L409 340 L397 337 L381 338 L367 334 L355 331 L356 324 L353 318 L347 311 L333 309 L317 304.5 L303 298 L287 296 L283 292 L277 284 L271 273 L262 269Z" fill="#29d660" stroke="#29d660" stroke-width="2"/><path d="M121 315 L113 324 L101 334 L94 340 L93 350 L99 358 L111 356 L115 362 L109 378 L107 388 L113 394 L125 398 L137 406 L147 418 L155 428 L159 434 L153 442 L143 446 L133 444 L129 448 L135 452 L125 454 L113 456 L105 458 L109 464 L109 470 L119 476 L133 478 L145 480 L155 480 L165 472 L169 464 L179 460 L191 464 L201 470 L207 466 L213 466 L223 470 L231 468 L241 460 L251 450 L255 438 L261 428 L261 420 L259 410 L260 400 L255 390 L251 382 L239 383 L231 380 L221 376 L213 366 L207 360 L209 352 L205 346 L199 350 L191 358 L189 370 L191 379 L177 376 L165 368 L157 360 L149 350 L145 338 L141 330 L133 326 L121 315Z" fill="#ffc400" stroke="#ffc400" stroke-width="2"/><path d="M355 331 L367 334 L381 338 L397 337 L409 340 L415 346 L421 351 L429 346 L441 342 L443 342 L440 352 L441 366 L437 376 L439 386 L429 390 L417 388 L407 392 L401 398 L389 404 L377 409 L371 416 L377 422 L381 418 L387 424 L393 431 L381 434 L375 442 L379 454 L385 462 L389 468 L381 474 L367 478 L357 481 L349 474 L341 470 L333 468 L321 460 L315 468 L305 472 L297 466 L289 458 L281 456 L281 448 L273 440 L267 430 L261 428 L261 420 L259 410 L260 400 L255 390 L251 382 L257 380 L265 376 L271 380 L281 379 L287 376 L289 368 L285 360 L289 354 L301 352 L309 356 L317 360 L329 359 L335 352 L345 348 L341 342 L345 336 L355 331Z" fill="#ffff00" stroke="#ffff00" stroke-width="2"/><path d="M205 346 L207 334 L211 330 L213 328 L221 330 L225 324 L233 320 L239 312 L253 306 L259 301 L263 306 L269 310 L281 307 L293 308 L307 307 L317 304.5 L333 309 L347 311 L353 318 L356 324 L355 331 L345 336 L341 342 L345 348 L335 352 L329 359 L317 360 L309 356 L301 352 L289 354 L285 360 L289 368 L287 376 L281 379 L271 380 L265 376 L257 380 L251 382 L239 383 L231 380 L221 376 L213 366 L207 360 L209 352 L205 346Z" fill="#ffff00" stroke="#ffff00" stroke-width="2"/><path d="M130.4 287.1 h5 v4.5 h7 v-4.5 h5 v14 h-5 v-4.5 h-7 v4.5 h-5z" fill="#151515"/><path d="M244.6 333.5 h5 v4.5 h7 v-4.5 h5 v14 h-5 v-4.5 h-7 v4.5 h-5z" fill="#151515"/><path d="M265 333.5 h5 v4.5 h7 v-4.5 h5 v14 h-5 v-4.5 h-7 v4.5 h-5z" fill="#151515"/><path d="M129.4 400.5 h5 v4.5 h7 v-4.5 h5 v14 h-5 v-4.5 h-7 v4.5 h-5z" fill="#151515"/><path d="M150 400.5 h5 v4.5 h7 v-4.5 h5 v14 h-5 v-4.5 h-7 v4.5 h-5z" fill="#151515"/><path d="M170.6 400.5 h5 v4.5 h7 v-4.5 h5 v14 h-5 v-4.5 h-7 v4.5 h-5z" fill="#151515"/><path d="M334.4 393.1 h5 v4.5 h7 v-4.5 h5 v14 h-5 v-4.5 h-7 v4.5 h-5z" fill="#151515"/></svg>
<div style="left:22.6px;top:492.3px;width:96.2px;height:40.8px;background:#4f97b5;"></div>
<span class="b i c" style="left:23px;top:495.06px;font-size:13.75px;width:96.2px;color:#fff;">Vsa</span>
<span class="b i c" style="left:23px;top:509.36px;font-size:13.75px;width:96.2px;color:#fff;">opozorila</span>
<div style="left:121px;top:492.3px;width:617px;height:40.8px;background:#f3f3f3;"></div>
<div style="left:121.2px;top:492.2px;width:29.2px;height:41.1px;border:1.6px solid #000;background:#f3f3f3;"></div>
<svg class="ic" style="left:123.1px;top:493.3px;width:25.4px;height:25.4px;background:#ffc400;--bg:#ffc400;border:1px solid #3a3a20;height:23.8px;" viewBox="2.28 2.28 26.44 26.44" preserveAspectRatio="none"><use href="#i-wind" x="0" y="0" width="31" height="31" opacity="1"/></svg>
<div style="left:151px;top:492.2px;width:29.2px;height:41.1px;border:1.6px solid #000;background:#f3f3f3;"></div>
<svg class="ic" style="left:152.9px;top:493.3px;width:25.4px;height:25.4px;background:#ffc400;--bg:#ffc400;border:1px solid #3a3a20;height:23.8px;" viewBox="2.28 2.28 26.44 26.44" preserveAspectRatio="none"><use href="#i-rain" x="0" y="0" width="31" height="31" opacity="1"/></svg>
<div style="left:180.8px;top:492.2px;width:29.2px;height:41.1px;border:1.6px solid #000;background:#f3f3f3;"></div>
<svg class="ic" style="left:182.7px;top:493.3px;width:25.4px;height:25.4px;background:#ffff00;--bg:#ffff00;border:1px solid #3a3a20;height:23.8px;" viewBox="2.28 2.28 26.44 26.44" preserveAspectRatio="none"><use href="#i-storm" x="0" y="0" width="31" height="31" opacity="1"/></svg>
<div style="left:210.6px;top:492.2px;width:29.2px;height:41.1px;border:1.6px solid #000;background:#f3f3f3;"></div>
<svg class="ic" style="left:212.5px;top:493.3px;width:25.4px;height:25.4px;background:#29d660;--bg:#29d660;border:1px solid #3a3a20;height:23.8px;" viewBox="2.28 2.28 26.44 26.44" preserveAspectRatio="none"><use href="#i-snow" x="0" y="0" width="31" height="31" opacity="1"/></svg>
<div style="left:240.4px;top:492.2px;width:29.2px;height:41.1px;border:1.6px solid #000;background:#f3f3f3;"></div>
<svg class="ic" style="left:242.3px;top:493.3px;width:25.4px;height:25.4px;background:#29d660;--bg:#29d660;border:1px solid #3a3a20;height:23.8px;" viewBox="2.28 2.28 26.44 26.44" preserveAspectRatio="none"><use href="#i-ice" x="0" y="0" width="31" height="31" opacity="1"/></svg>
<div style="left:270.2px;top:492.2px;width:29.2px;height:41.1px;border:1.6px solid #000;background:#f3f3f3;"></div>
<svg class="ic" style="left:272.1px;top:493.3px;width:25.4px;height:25.4px;background:#29d660;--bg:#29d660;border:1px solid #3a3a20;height:23.8px;" viewBox="2.28 2.28 26.44 26.44" preserveAspectRatio="none"><use href="#i-low" x="0" y="0" width="31" height="31" opacity="1"/></svg>
<div style="left:300px;top:492.2px;width:29.2px;height:41.1px;border:1.6px solid #000;background:#f3f3f3;"></div>
<svg class="ic" style="left:301.9px;top:493.3px;width:25.4px;height:25.4px;background:#29d660;--bg:#29d660;border:1px solid #3a3a20;height:23.8px;" viewBox="2.28 2.28 26.44 26.44" preserveAspectRatio="none"><use href="#i-high" x="0" y="0" width="31" height="31" opacity="1"/></svg>
<div style="left:329.8px;top:492.2px;width:29.2px;height:41.1px;border:1.6px solid #000;background:#f3f3f3;"></div>
<svg class="ic" style="left:331.7px;top:493.3px;width:25.4px;height:25.4px;background:#29d660;--bg:#29d660;border:1px solid #3a3a20;height:23.8px;" viewBox="2.28 2.28 26.44 26.44" preserveAspectRatio="none"><use href="#i-fire" x="0" y="0" width="31" height="31" opacity="1"/></svg>
<div style="left:359.6px;top:492.2px;width:29.2px;height:41.1px;border:1.6px solid #000;background:#f3f3f3;"></div>
<svg class="ic" style="left:361.5px;top:493.3px;width:25.4px;height:25.4px;background:#ffff00;--bg:#ffff00;border:1px solid #3a3a20;height:23.8px;" viewBox="2.28 2.28 26.44 26.44" preserveAspectRatio="none"><use href="#i-coast" x="0" y="0" width="31" height="31" opacity="1"/></svg>
<div style="left:389.4px;top:492.2px;width:29.2px;height:41.1px;border:1.6px solid #000;background:#f3f3f3;"></div>
<svg class="ic" style="left:391.3px;top:493.3px;width:25.4px;height:25.4px;background:#29d660;--bg:#29d660;border:1px solid #3a3a20;height:23.8px;" viewBox="2.28 2.28 26.44 26.44" preserveAspectRatio="none"><use href="#i-aval" x="0" y="0" width="31" height="31" opacity="1"/></svg>
<div style="left:22.6px;top:536px;width:96.2px;height:40.8px;background:#4f97b5;"></div>
<span class="b i c" style="left:23px;top:550.06px;font-size:13.75px;width:96.2px;color:#fff;">Slovenija</span>
<div style="left:121px;top:536px;width:617px;height:40.8px;background:#f3f3f3;"></div>
<div style="left:601.1px;top:535.8px;width:25.7px;height:21.5px;background:#ffc400;"></div>
<div style="left:601.1px;top:557.3px;width:26px;height:18.9px;background:#4f97b5;"></div>
<span class="dv b i c" style="left:601.1px;top:560.07px;font-size:14.8px;width:26px;color:#fff;">to</span>
<div style="left:627.48px;top:535.8px;width:25.7px;height:21.5px;background:#ffff00;"></div>
<div style="left:653.48px;top:557.3px;width:0.5px;height:18.9px;background:#fafafa;"></div>
<span class="dv c" style="left:627.48px;top:560.07px;font-size:14.8px;width:26px;color:#333;">sr</span>
<div style="left:653.86px;top:535.8px;width:25.7px;height:21.5px;background:#ffff00;"></div>
<div style="left:679.86px;top:557.3px;width:0.5px;height:18.9px;background:#fafafa;"></div>
<span class="dv c" style="left:653.86px;top:560.07px;font-size:14.8px;width:26px;color:#333;">če</span>
<div style="left:680.24px;top:535.8px;width:25.7px;height:21.5px;background:#ffff00;"></div>
<div style="left:706.24px;top:557.3px;width:0.5px;height:18.9px;background:#fafafa;"></div>
<span class="dv c" style="left:680.24px;top:560.07px;font-size:14.8px;width:26px;color:#333;">pe</span>
<div style="left:706.62px;top:535.8px;width:25.7px;height:21.5px;background:#29d660;"></div>
<div style="left:732.62px;top:557.3px;width:0.5px;height:18.9px;background:#fafafa;"></div>
<span class="dv c" style="left:706.62px;top:560.07px;font-size:14.8px;width:26px;color:#333;">so</span>
<div style="left:23px;top:595.2px;width:715px;height:204.2px;background:#f3f3f3;border:1px solid #cfcfcf;border-top:2.5px solid #e2e2e2;"></div>
<div style="left:24px;top:597.7px;width:713px;height:49px;background:#4f97b5;"></div>
<span class="b i c" style="left:24px;top:602.46px;font-size:13.75px;width:359.4px;color:#fff;">VSA OPOZORILA - danes - TOREK</span>
<span class="b i c" style="left:24px;top:624.66px;font-size:13.75px;width:359.4px;color:#fff;">Slovenija</span>
<span class="b i c" style="left:385px;top:613.06px;font-size:13.75px;width:350px;color:#fff;">v teku dneva</span>
<span class="c" style="left:24px;top:649.02px;font-size:12.5px;width:370.6px;color:#1d5a8a;">Opis in nasveti</span>
<span class="c" style="left:375.7px;top:649.62px;font-size:12.5px;width:40px;color:#444;">00</span>
<div style="left:395.2px;top:666px;width:1px;height:5px;background:#7fa6c9;"></div>
<span class="c" style="left:415.6px;top:649.62px;font-size:12.5px;width:40px;color:#444;">03</span>
<div style="left:435.1px;top:666px;width:1px;height:5px;background:#7fa6c9;"></div>
<span class="c" style="left:455.5px;top:649.62px;font-size:12.5px;width:40px;color:#444;">06</span>
<div style="left:475px;top:666px;width:1px;height:5px;background:#7fa6c9;"></div>
<span class="c" style="left:495.4px;top:649.62px;font-size:12.5px;width:40px;color:#444;">09</span>
<div style="left:514.9px;top:666px;width:1px;height:5px;background:#7fa6c9;"></div>
<span class="c" style="left:542.5px;top:649.62px;font-size:12.5px;width:40px;color:#444;">12</span>
<div style="left:562px;top:666px;width:1px;height:5px;background:#7fa6c9;"></div>
<span class="c" style="left:582.53px;top:649.62px;font-size:12.5px;width:40px;color:#444;">15</span>
<div style="left:602.03px;top:666px;width:1px;height:5px;background:#7fa6c9;"></div>
<span class="c" style="left:622.56px;top:649.62px;font-size:12.5px;width:40px;color:#444;">18</span>
<div style="left:642.06px;top:666px;width:1px;height:5px;background:#7fa6c9;"></div>
<span class="c" style="left:662.59px;top:649.62px;font-size:12.5px;width:40px;color:#444;">21</span>
<div style="left:682.09px;top:666px;width:1px;height:5px;background:#7fa6c9;"></div>
<span class="c" style="left:703.42px;top:649.62px;font-size:12.5px;width:40px;color:#444;">24</span>
<div style="left:722.12px;top:666px;width:1px;height:5px;background:#7fa6c9;"></div>
<div style="left:24px;top:670.5px;width:713px;height:1px;background:#8db0cf;"></div>
<span class="b" style="left:36.6px;top:676.36px;font-size:13.75px;color:#4a4a4a;">Slovenija - severozahod</span>
<svg class="ic" style="left:341.1px;top:672.7px;width:21.3px;height:21.3px;background:#ffff00;--bg:#ffff00;border:1px solid #2a2a2a;" viewBox="1.46 1.46 28.09 28.09"><use href="#i-wind" x="0" y="0" width="31" height="31" opacity="1"/></svg>
<svg class="ic" style="left:361.75px;top:672.7px;width:21.3px;height:21.3px;background:#ffc400;--bg:#ffc400;border:1px solid #2a2a2a;" viewBox="1.46 1.46 28.09 28.09"><use href="#i-rain" x="0" y="0" width="31" height="31" opacity="1"/></svg>
<div style="left:395.7px;top:672px;width:119.7px;height:24.2px;background:#ffff00;"></div>
<div style="left:515.4px;top:672px;width:13.3px;height:24.2px;background:#29d660;"></div>
<div style="left:528.7px;top:672px;width:180.573px;height:24.2px;background:#ffc400;"></div>
<div style="left:709.273px;top:672px;width:13.343px;height:24.2px;background:#29d660;"></div>
<div style="left:24px;top:696px;width:713px;height:1px;background:#8aaccb;"></div>
<span class="b" style="left:36.6px;top:701.60px;font-size:13.75px;color:#4a4a4a;">Slovenija - jugozahod</span>
<svg class="ic" style="left:299.8px;top:697.94px;width:21.3px;height:21.3px;background:#ffc400;--bg:#ffc400;border:1px solid #2a2a2a;" viewBox="1.46 1.46 28.09 28.09"><use href="#i-wind" x="0" y="0" width="31" height="31" opacity="1"/></svg>
<svg class="ic" style="left:320.45px;top:697.94px;width:21.3px;height:21.3px;background:#ffc400;--bg:#ffc400;border:1px solid #2a2a2a;" viewBox="1.46 1.46 28.09 28.09"><use href="#i-rain" x="0" y="0" width="31" height="31" opacity="1"/></svg>
<svg class="ic" style="left:341.1px;top:697.94px;width:21.3px;height:21.3px;background:#ffff00;--bg:#ffff00;border:1px solid #2a2a2a;" viewBox="1.46 1.46 28.09 28.09"><use href="#i-storm" x="0" y="0" width="31" height="31" opacity="1"/></svg>
<svg class="ic" style="left:361.75px;top:697.94px;width:21.3px;height:21.3px;background:#ffff00;--bg:#ffff00;border:1px solid #2a2a2a;" viewBox="1.46 1.46 28.09 28.09"><use href="#i-coast" x="0" y="0" width="31" height="31" opacity="1"/></svg>
<div style="left:395.7px;top:697.24px;width:326.916px;height:24.2px;background:#ffc400;"></div>
<div style="left:24px;top:721px;width:713px;height:1px;background:#8aaccb;"></div>
<span class="b" style="left:36.6px;top:726.84px;font-size:13.75px;color:#4a4a4a;">Slovenija - osrednja</span>
<svg class="ic" style="left:341.1px;top:723.18px;width:21.3px;height:21.3px;background:#ffff00;--bg:#ffff00;border:1px solid #2a2a2a;" viewBox="1.46 1.46 28.09 28.09"><use href="#i-rain" x="0" y="0" width="31" height="31" opacity="1"/></svg>
<svg class="ic" style="left:361.75px;top:723.18px;width:21.3px;height:21.3px;background:#ffff00;--bg:#ffff00;border:1px solid #2a2a2a;" viewBox="1.46 1.46 28.09 28.09"><use href="#i-storm" x="0" y="0" width="31" height="31" opacity="1"/></svg>
<div style="left:395.7px;top:722.48px;width:326.916px;height:24.2px;background:#ffff00;"></div>
<div style="left:24px;top:746px;width:713px;height:1px;background:#8aaccb;"></div>
<span class="b" style="left:36.6px;top:752.08px;font-size:13.75px;color:#4a4a4a;">Slovenija - jugovzhod</span>
<svg class="ic" style="left:361.75px;top:748.42px;width:21.3px;height:21.3px;background:#ffff00;--bg:#ffff00;border:1px solid #2a2a2a;" viewBox="1.46 1.46 28.09 28.09"><use href="#i-storm" x="0" y="0" width="31" height="31" opacity="1"/></svg>
<div style="left:395.7px;top:747.72px;width:246.858px;height:24.2px;background:#29d660;"></div>
<div style="left:642.558px;top:747.72px;width:66.715px;height:24.2px;background:#ffff00;"></div>
<div style="left:709.273px;top:747.72px;width:13.343px;height:24.2px;background:#29d660;"></div>
<div style="left:24px;top:772px;width:713px;height:1px;background:#8aaccb;"></div>
<span class="b" style="left:36.6px;top:777.32px;font-size:13.75px;color:#4a4a4a;">Slovenija - severovzhod</span>
<svg class="ic" style="left:361.75px;top:773.66px;width:21.3px;height:21.3px;background:#ffff00;--bg:#ffff00;border:1px solid #2a2a2a;" viewBox="1.46 1.46 28.09 28.09"><use href="#i-wind" x="0" y="0" width="31" height="31" opacity="1"/></svg>
<div style="left:395.7px;top:772.96px;width:181.3px;height:24.2px;background:#ffff00;"></div>
<div style="left:577px;top:772.96px;width:145.616px;height:24.2px;background:#29d660;"></div>
<div style="left:24px;top:797px;width:713px;height:1px;background:#8aaccb;"></div>
<div style="left:435.1px;top:671.6px;width:1px;height:125px;background:rgba(255,255,255,0.55);"></div>
<div style="left:475px;top:671.6px;width:1px;height:125px;background:rgba(255,255,255,0.55);"></div>
<div style="left:514.9px;top:671.6px;width:1px;height:125px;background:rgba(255,255,255,0.55);"></div>
<div style="left:562px;top:671.6px;width:1px;height:125px;background:rgba(255,255,255,0.55);"></div>
<div style="left:602.03px;top:671.6px;width:1px;height:125px;background:rgba(255,255,255,0.55);"></div>
<div style="left:642.06px;top:671.6px;width:1px;height:125px;background:rgba(255,255,255,0.55);"></div>
<div style="left:682.09px;top:671.6px;width:1px;height:125px;background:rgba(255,255,255,0.55);"></div>
<div style="left:541.8px;top:671.6px;width:2.1px;height:125px;background:#000;"></div>
<div style="left:560.1px;top:671.6px;width:2.1px;height:125px;background:#000;"></div>
<div style="left:395.7px;top:696px;width:326.9px;height:1px;background:#c4d2e8;"></div>
<div style="left:395.7px;top:721px;width:326.9px;height:1px;background:#c4d2e8;"></div>
<div style="left:395.7px;top:746px;width:326.9px;height:1px;background:#c4d2e8;"></div>
<div style="left:395.7px;top:772px;width:326.9px;height:1px;background:#c4d2e8;"></div>
<div style="left:395.7px;top:797px;width:326.9px;height:1px;background:#c4d2e8;"></div>
<div style="left:745.5px;top:151.5px;width:173px;height:531.5px;background:#e6edf5;"></div>
<div style="left:745.5px;top:121.5px;width:173px;height:29px;background:#4f97b5;"></div>
<span class="b" style="left:753.6px;top:129.15px;font-size:12.7px;color:#fff;">Legenda</span>
<svg class="ic" style="left:752.1px;top:156.1px;width:31px;height:31px;background:#fff;--bg:#fff;border:2px solid #000;height:30.7px;" viewBox="2.00 2.00 27.00 27.00"><use href="#i-wind" x="0" y="0" width="31" height="31" opacity="1"/></svg>
<span style="left:792.2px;top:161.63px;font-size:12.6px;color:#333;">Veter</span>
<svg class="ic" style="left:752.1px;top:190.53px;width:31px;height:31px;background:#fff;--bg:#fff;border:2px solid #000;height:30.7px;" viewBox="2.00 2.00 27.00 27.00"><use href="#i-rain" x="0" y="0" width="31" height="31" opacity="1"/></svg>
<span style="left:792.2px;top:196.13px;font-size:12.6px;color:#333;">Dež</span>
<svg class="ic" style="left:752.1px;top:224.96px;width:31px;height:31px;background:#fff;--bg:#fff;border:2px solid #000;height:30.7px;" viewBox="2.00 2.00 27.00 27.00"><use href="#i-storm" x="0" y="0" width="31" height="31" opacity="1"/></svg>
<span style="left:792.2px;top:230.63px;font-size:12.6px;color:#333;">Nevihte</span>
<svg class="ic" style="left:752.1px;top:259.39px;width:31px;height:31px;background:#fff;--bg:#fff;border:2px solid #000;height:30.7px;" viewBox="2.00 2.00 27.00 27.00"><use href="#i-snow" x="0" y="0" width="31" height="31" opacity="1"/></svg>
<span style="left:792.2px;top:265.13px;font-size:12.6px;color:#333;">Sneg</span>
<svg class="ic" style="left:752.1px;top:293.82px;width:31px;height:31px;background:#fff;--bg:#fff;border:2px solid #000;height:30.7px;" viewBox="2.00 2.00 27.00 27.00"><use href="#i-ice" x="0" y="0" width="31" height="31" opacity="1"/></svg>
<span style="left:792.2px;top:299.63px;font-size:12.6px;color:#333;">Poledica/žled</span>
<svg class="ic" style="left:752.1px;top:328.25px;width:31px;height:31px;background:#fff;--bg:#fff;border:2px solid #000;height:30.7px;" viewBox="2.00 2.00 27.00 27.00"><use href="#i-low" x="0" y="0" width="31" height="31" opacity="1"/></svg>
<span style="left:792.2px;top:334.13px;font-size:12.6px;color:#333;">Nizka temperatura</span>
<svg class="ic" style="left:752.1px;top:362.68px;width:31px;height:31px;background:#fff;--bg:#fff;border:2px solid #000;height:30.7px;" viewBox="2.00 2.00 27.00 27.00"><use href="#i-high" x="0" y="0" width="31" height="31" opacity="1"/></svg>
<span style="left:792.2px;top:368.63px;font-size:12.6px;color:#333;">Visoka temperatura</span>
<svg class="ic" style="left:752.1px;top:397.11px;width:31px;height:31px;background:#fff;--bg:#fff;border:2px solid #000;height:30.7px;" viewBox="2.00 2.00 27.00 27.00"><use href="#i-fire" x="0" y="0" width="31" height="31" opacity="1"/></svg>
<span style="left:792.2px;top:403.13px;font-size:12.6px;color:#333;">Požarna ogroženost</span>
<svg class="ic" style="left:752.1px;top:431.54px;width:31px;height:31px;background:#fff;--bg:#fff;border:2px solid #000;height:30.7px;" viewBox="2.00 2.00 27.00 27.00"><use href="#i-coast" x="0" y="0" width="31" height="31" opacity="1"/></svg>
<span style="left:792.2px;top:437.63px;font-size:12.6px;color:#333;">Obalni dogodek</span>
<svg class="ic" style="left:752.1px;top:465.97px;width:31px;height:31px;background:#fff;--bg:#fff;border:2px solid #000;height:30.7px;" viewBox="2.00 2.00 27.00 27.00"><use href="#i-aval" x="0" y="0" width="31" height="31" opacity="1"/></svg>
<span style="left:792.2px;top:472.13px;font-size:12.6px;color:#333;">Snežni plazovi</span>
<div style="left:745.5px;top:504px;width:173px;height:1px;background:#9a9a9a;"></div>
<div style="left:745.5px;top:516px;width:173px;height:29.5px;background:#4f97b5;"></div>
<div style="left:745.5px;top:545.5px;width:173px;height:1.2px;background:#fff;"></div>
<div style="left:745.5px;top:150.5px;width:173px;height:1.2px;background:#fff;"></div>
<span class="b" style="left:753.6px;top:523.85px;font-size:12.7px;color:#fff;">Legenda</span>
<div style="left:752.1px;top:550.9px;width:31.1px;height:31.4px;background:#29d660;border:1px solid #1a3a1a;"></div>
<span style="left:792.2px;top:556.83px;font-size:12.6px;color:#333;">Brez posebnosti</span>
<div style="left:752.1px;top:585.35px;width:31.1px;height:31.4px;background:#ffff00;border:1px solid #1a3a1a;"></div>
<span style="left:792.2px;top:591.28px;font-size:12.6px;color:#333;">Bodite pozorni</span>
<div style="left:752.1px;top:619.8px;width:31.1px;height:31.4px;background:#ffc400;border:1px solid #1a3a1a;"></div>
<span style="left:792.2px;top:625.73px;font-size:12.6px;color:#333;">Bodite pripravljeni</span>
<div style="left:752.1px;top:654.25px;width:31.1px;height:31.4px;background:#ff0000;border:1px solid #1a3a1a;"></div>
<span style="left:792.2px;top:660.18px;font-size:12.6px;color:#333;">Ukrepajte</span></body></html>
